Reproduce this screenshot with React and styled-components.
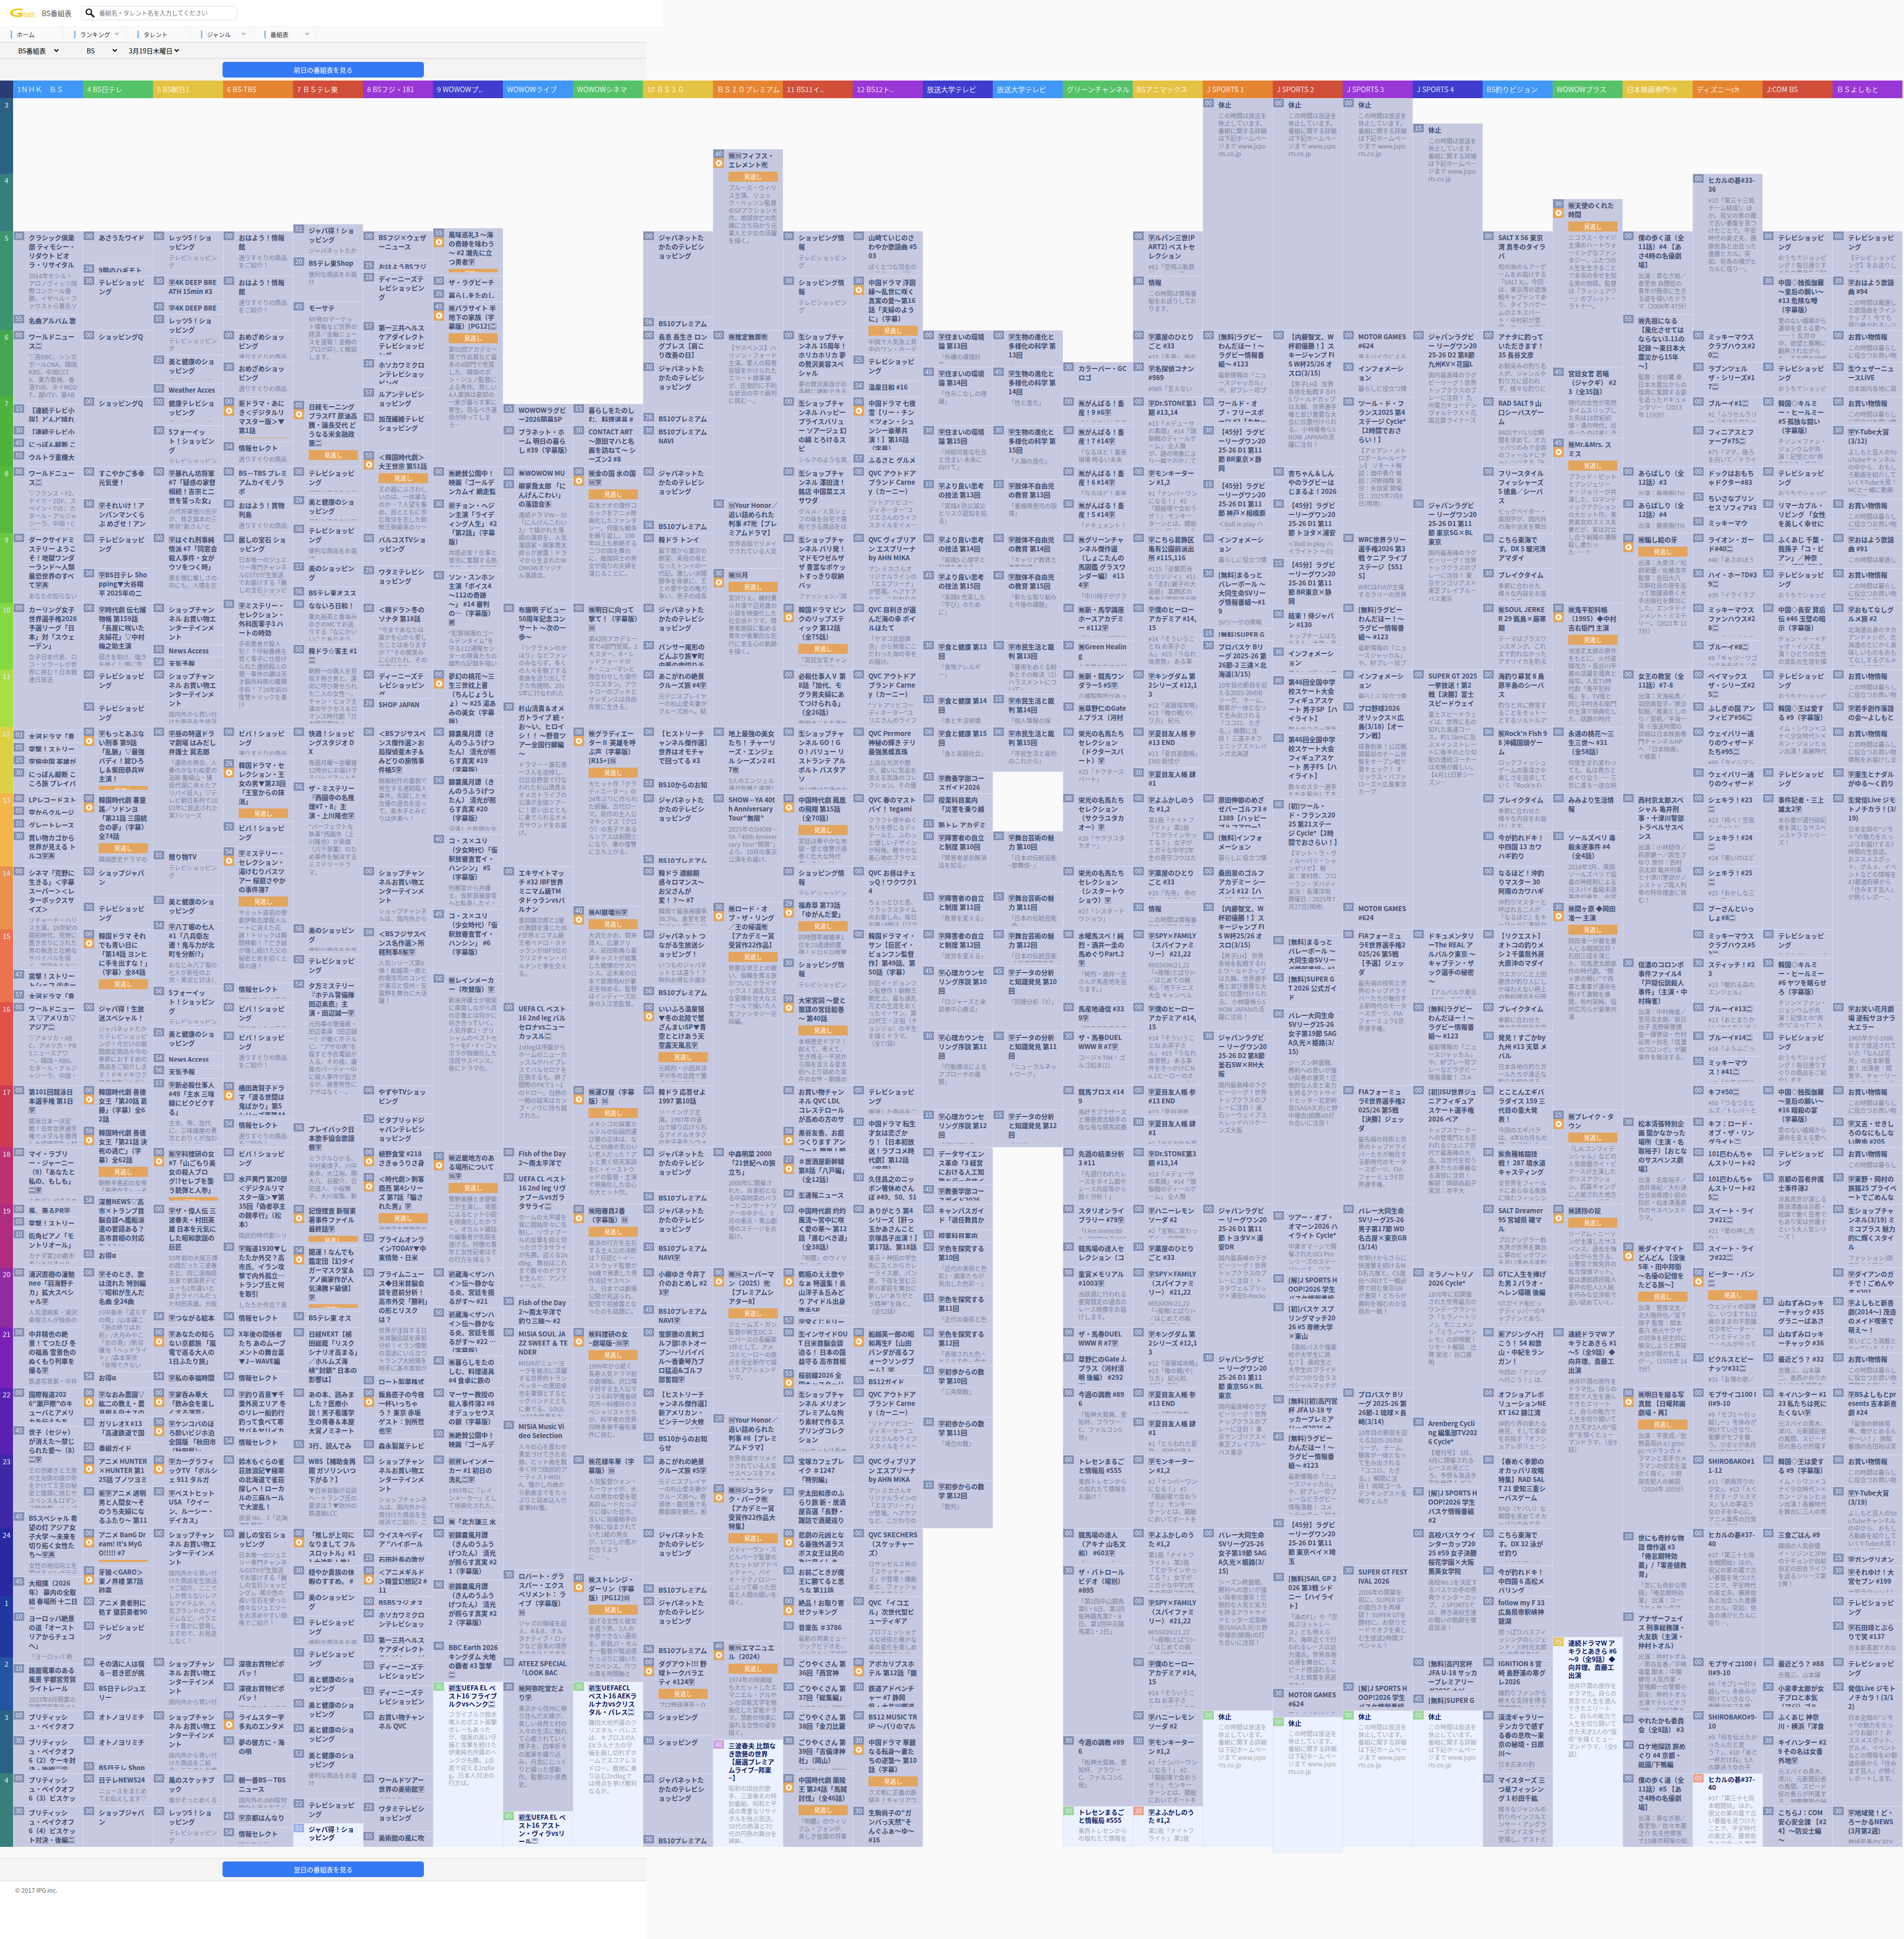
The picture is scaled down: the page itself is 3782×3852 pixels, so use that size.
import React from "react";
import styled, { createGlobalStyle } from "styled-components";

const GlobalStyle = createGlobalStyle`
  * {
    box-sizing: border-box;
  }
  body {
    margin: 0;
    width: 3782px;
    background-color: #fafafa;
    font-family: "Noto Sans CJK JP", "Liberation Sans", sans-serif;
  }
`;

const Page = styled.div`
  width: 3782px;
  height: 3852px;
  overflow: hidden;
`;
const Header = styled.header`
  display: flex;
  align-items: center;
  width: 1316px;
  height: 52px;
  padding-left: 19px;
  background-color: #fff;
`;
const SiteName = styled.h1`
  width: 78px;
  margin: 0 0 0 12px;
  font-size: 14px;
  font-weight: normal;
  color: #555;
`;
const SearchBox = styled.div`
  display: flex;
  align-items: center;
  width: 310px;
  height: 28px;
  padding: 0 0 1px 7px;
  border: 1px solid #ddd;
  border-radius: 4px;
  font-size: 12px;
  color: #777;
  svg {
    margin-right: 9px;
  }
`;
const Nav = styled.nav`
  display: flex;
  width: 1316px;
  height: 31px;
  border-top: 1px solid #eee;
  background-color: #fafafa;
`;
const NavItem = styled.div`
  display: flex;
  align-items: center;
  width: 126px;
  padding-left: 21px;
  border-right: 1px solid #eee;
  font-size: 12px;
  color: #333;
  &::before {
    content: "";
    width: 3px;
    height: 15px;
    margin-right: 9px;
    background-color: #8db8f2;
  }
  svg {
    margin: 0 14px 0 auto;
  }
`;
const Selects = styled.div`
  display: flex;
  align-items: center;
  width: 1284px;
  height: 34px;
  padding-left: 36px;
  border-top: 2px solid #e4e4e4;
  border-bottom: 2px solid #e0e0e0;
  background-color: #f4f4f4;
`;
const Select = styled.div`
  display: flex;
  align-items: center;
  justify-content: space-between;
  width: ${(props) => props.$width}px;
  margin-right: ${(props) => props.$gap}px;
  font-size: 13px;
  color: #000;
`;
const DayBar = styled.div`
  display: flex;
  align-items: center;
  justify-content: center;
  width: 1284px;
  height: ${(props) => props.$height}px;
  border-bottom: ${(props) => (props.$last ? "1px solid #ddd" : "none")};
  border-top: ${(props) => (props.$last ? "1px solid #ddd" : "none")};
  background-color: #f4f4f4;
`;
const DayButton = styled.button`
  width: 400px;
  height: 31px;
  padding: 0;
  border: none;
  border-radius: 5px;
  background-color: #3478f6;
  font-family: inherit;
  font-size: 13px;
  color: #fff;
`;
const Guide = styled.div`
  display: flex;
  margin-bottom: 9px;
`;
const Hours = styled.div`
  width: 26px;
`;
const Corner = styled.div`
  height: 35px;
  background-color: #2b3b78;
`;
const Hour = styled.div`
  padding-top: 3px;
  background-color: ${(props) => props.$color};
  font-size: 14px;
  line-height: 20px;
  text-align: center;
  color: #e8eef0;
`;
const Column = styled.div`
  width: 139px;
`;
const ColumnName = styled.div`
  height: 35px;
  padding-left: 8px;
  background-color: ${(props) => props.$color};
  font-size: 14px;
  line-height: 35px;
  white-space: nowrap;
  overflow: hidden;
  color: rgba(255, 255, 255, 0.88);
`;
const Program = styled.div`
  display: flex;
  overflow: hidden;
  border-top: 1px solid ${(props) => (props.$next ? "#e3e9f8" : "#dcdff0")};
  border-left: 1px solid ${(props) => (props.$next ? "#dde3f2" : "#dcdff0")};
  background-color: ${(props) => (props.$next ? "#ebf1ff" : "#c6c9e0")};
`;
const Side = styled.div`
  flex: none;
  width: 21px;
  margin-right: 9px;
`;
const Minute = styled.div`
  height: 17px;
  background-color: ${(props) => props.$color};
  font-size: 12px;
  line-height: 16px;
  text-align: center;
  color: #e9ecf8;
`;
const Play = styled.div`
  display: flex;
  align-items: center;
  justify-content: center;
  height: 20px;
  background-color: #e3a55e;
`;
const Body = styled.div`
  width: 98px;
  margin: 3px 0 7px;
  overflow: hidden;
  word-break: break-all;
`;
const Title = styled.div`
  font-size: 13px;
  font-weight: bold;
  line-height: ${(props) => (props.$next ? 16 : 18)}px;
  color: ${(props) => (props.$next ? "#0c1c5e" : "#414d70")};
`;
const Missed = styled.div`
  height: 20px;
  margin: 5px 0 -1px;
  background-color: #e3a55e;
  font-size: 12px;
  line-height: 19px;
  text-align: center;
  color: #fff;
`;
const Description = styled.div`
  margin-top: 5px;
  font-size: 12px;
  line-height: 15.1px;
  color: ${(props) => (props.$next ? "#a3a6ae" : "#7e839c")};
`;
const Footer = styled.footer`
  width: 1284px;
  height: 129px;
  padding: 9px 0 0 30px;
  background-color: #fff;
  font-size: 12px;
  color: #666;
`;

const channelColors = ["#4097f7", "#55c269", "#e4c243", "#e68531", "#d14e38", "#9936d6", "#403dce"];
const badgeColors = { g: "#98d699", b: "#9bb0ec", y: "#e8c65c", r: "#f2a08a", p: "#d0a0dd" };
const hourColors = [
  "#2b6184", "#367f7c", "#3d9470", "#45a651", "#4db33c", "#58b93f", "#6bc842", "#83d944", "#a9de45",
  "#dcd044", "#f4b549", "#ea9150", "#ec7350", "#e25048", "#cf3a50", "#be3070", "#b02c80", "#902ca0",
  "#7a22b8", "#5a22b2", "#3f28a6", "#2a28a0", "#2138a0", "#2355a0", "#2b6184", "#367f7c",
];

// Top of every time slot in the grid, hhmm -> px. Crowded hours are stretched.
const slots = [
  [300, 195], [315, 245], [340, 295.5], [400, 345], [430, 395], [451, 445], [455, 453], [500, 459],
  [520, 510], [525, 517], [526, 523.5], [528, 541], [530, 548], [535, 573.5], [545, 598.5], [555, 623.5],
  [556, 630], [557, 638], [600, 655.5], [625, 705], [628, 712], [630, 719], [645, 728.5], [654, 755.5],
  [655, 762], [657, 770], [700, 787.5], [705, 794.5], [715, 801.5], [726, 819], [730, 844.5], [745, 869.5],
  [754, 876.5], [755, 894.5], [757, 901], [800, 926.5], [815, 951.5], [825, 976.5], [829, 983.5],
  [830, 991], [855, 1025.5], [856, 1033], [858, 1041], [900, 1058.5], [927, 1116], [929, 1122.5],
  [930, 1129], [945, 1132.5], [956, 1165], [959, 1190], [1000, 1197.5], [1015, 1247.5], [1030, 1272],
  [1055, 1279.5], [1058, 1304.5], [1100, 1329.5], [1115, 1379], [1129, 1386.5], [1130, 1393.5],
  [1200, 1443.5], [1203, 1450], [1205, 1475], [1215, 1500], [1229, 1507], [1230, 1525], [1245, 1533],
  [1250, 1539.5], [1253, 1546], [1256, 1553], [1300, 1575.5], [1305, 1600.5], [1315, 1625.5],
  [1325, 1632], [1330, 1650.5], [1340, 1657], [1354, 1682], [1355, 1689], [1356, 1696.5], [1400, 1721],
  [1415, 1771], [1425, 1778], [1429, 1785], [1430, 1792], [1440, 1799], [1445, 1806], [1454, 1828],
  [1456, 1835], [1459, 1842], [1500, 1845.5], [1525, 1895.5], [1530, 1902.5], [1545, 1919], [1547, 1926],
  [1550, 1933.5], [1554, 1944.5], [1555, 1952], [1556, 1959], [1557, 1966], [1559, 1974], [1600, 1991],
  [1625, 2040.5], [1630, 2047.5], [1654, 2091.5], [1655, 2098], [1656, 2115.5], [1657, 2141.5],
  [1659, 2148], [1700, 2155.5], [1715, 2205], [1729, 2211.5], [1730, 2219], [1754, 2222], [1756, 2229.5],
  [1759, 2236.5], [1800, 2279], [1810, 2286.5], [1827, 2294], [1830, 2329], [1845, 2353], [1854, 2361],
  [1856, 2367], [1858, 2374], [1900, 2392], [1905, 2417], [1915, 2442], [1925, 2449], [1930, 2467],
  [1954, 2474], [1955, 2481], [2000, 2517.5], [2015, 2568], [2030, 2574.5], [2045, 2591.5], [2050, 2598],
  [2054, 2605], [2057, 2612.5], [2100, 2637], [2130, 2687], [2140, 2692.5], [2145, 2712], [2153, 2719],
  [2154, 2724], [2155, 2732], [2200, 2757], [2220, 2808], [2230, 2814.5], [2235, 2821], [2245, 2831.5],
  [2250, 2838], [2253, 2844.5], [2254, 2852], [2255, 2858.5], [2256, 2864], [2300, 2889.5], [2315, 2940],
  [2320, 2946.5], [2330, 2953], [2345, 3003], [2350, 3010], [2400, 3035.5], [2410, 3042], [2425, 3085],
  [2430, 3110], [2435, 3117.5], [2440, 3124.5], [2445, 3132], [2450, 3138], [2456, 3145.5],
  [2459, 3159.5], [2500, 3170.5], [2504, 3195], [2510, 3202], [2528, 3210], [2530, 3220], [2533, 3245],
  [2535, 3252], [2540, 3259.5], [2556, 3265.5], [2557, 3272.5], [2600, 3291.5], [2602, 3298],
  [2610, 3305], [2626, 3323], [2630, 3341], [2631, 3348.5], [2645, 3365], [2655, 3374], [2700, 3398],
  [2705, 3405], [2724, 3423], [2730, 3448], [2740, 3455.5], [2753, 3473.5], [2755, 3499], [2800, 3523],
  [2822, 3572.5], [2825, 3579.5], [2830, 3588], [2845, 3598], [2851, 3622], [2854, 3629.5],
  [2855, 3637.5], [2856, 3644], [2900, 3669],
];
const slotTops = new Map(slots);

// One line per programme: hhmm, flag, title|description.
// "*" = catch-up available, g/b/y/r/p = not on air yet, "-" = nothing scheduled.
const channels = [
  ["1ＮＨＫ　ＢＳ", `
0500 クラシック倶楽部 ティモシー・リダウト ビオラ・リサイタル|2014年セシル・アロノヴィッツ国際コンクール優勝。イザベル・ファウストら著名ソリス
0555 名曲アルバム 歌
0600 ワールドニュース🈔|▽英BBC、シンガポールCNA、韓国KBS、中国CCTV、東方衛視、香港TVB、タイMCOT、越VTV、豪ABC、米NBCTV
0715 【連続テレビ小説】どんど晴れ
0730 【連続テレビ小
0745 にっぽん縦断 こ
0755 ウルトラ重機大
0800 ワールドニュース🈔|▽フランス・F2、ドイツ・ZDF、スペイン・TVE、カタール・アルジャジーラ、中国・CCTV、シンガポール
0900 ダークサイドミステリー ようこそ！地獄ワンダーランド～人類最恐世界のすべて🈑🈞|あなたの知らない
1000 カーリング女子世界選手権2026予選リーグ「日本」対「スウェーデン」|女子日本代表、ロコ・ソラーレが世界に挑む！日本戦連日放送
1203 大河ドラマ「豊
1205 突撃！ストリー
1215 空旅中国 英雄が
1230 にっぽん縦断 こころ旅 プレイバ
1300 LPレコードスト
1305 空からクルージ
1315 グレートレース
1330 買い物カゴから世界が見える トルコ🈑🈞
1400 シネマ「荒野に生きる」＜字幕スーパー＞＜レターボックスサイズ＞|リチャード・ハリス主演。19世紀の開拓時代、荒野に置き去りにされた男の執念と壮絶なサバイバルを描く。実話をもとに
1547 突撃！ストリートシェフ @ホー
1557 大河ドラマ「豊
1600 ワールドニュース ▽アメリカ▽アジア🈔|▽アメリカ・ABC、アメリカ・PBSニュースアワー、韓国・KBS、カタール・アルジャジーラ、中国・CCTV
1700 第101回競泳日本選手権 第1日🈑|競泳日本一決定戦！去年世界選手権でメダルを獲得した成田実生・村佐達也ら10代
1800 マイ・ラブリー・ジャーニー（9）「あなたと私の、もしも」🈔🈑|人生どんづまりの
1900 風、薫るPR🈑
1905 突撃！ストリー
1915 街角ピアノ「モントリオール」|カナダ第2の都市モントリオール
2000 浦沢直樹の漫勉neo「羽海野チカ」拡大スペシャル🈑|人気漫画家・浦沢直樹さんが独自の
2100 中井精也の絶景！てつたび 冬の福島 雪景色のぬくもり列車を撮る🈑|鉄道写真家・中井
2200 国際報道2026“瀬戸際”のキューバとアメリカを伝えたち
2245 世子（セジャ）が消えた～禁じられた愛～（8）🈔🈑|王の世継ぎと王族の主治医の娘が命をかけて王室の秘密と陰謀に挑むサスペンス＆ロマンス時代劇。イ・ゴ
2345 BSスペシャル 希望の灯 アジア女子大学 ～未来を切り拓く女性たち～🈑🈞|女性の地位向上を掲げるバングラデ
2445 大相撲（2026年） 幕内の全取組 春場所 十二日目
2510 ヨーロッパ絶景の道「オーストリアからチェコへ」|「ヨーロッパ 絶
2610 路面電車のある風景 宇都宮芳賀ライトレール|2023年8月開業の宇都宮芳賀ライト
2700 ブリティッシュ・ベイクオフ6
2730 ブリティッシュ・ベイクオフ6（2）ケーキ対決・後編🈔🈑
2800 ブリティッシュ・ベイクオフ6（3）ビスケット
2830 ブリティッシュ・ベイクオフ6（4）ビスケット対決・後編🈔🈑`],
  ["4 BS日テレ", `
0500 あさうたワイド
0526 9階のハギモトさ
0530 テレビショッピング
0600 ショッピングQ
0700 ショッピングQ
0800 すこやかご多幸元気便！
0830 🈑それいけ！アンパンマンくらぶ めざせ！アン
0900 テレビショッピング
0930 🈑BS日テレ Shopping▼大谷翔平 2025年の二刀流
1000 🈑時代劇 伝七捕物帳 第159話「長屋に咲いた夫婦花」▽中村梅之助主演|弱きを助け、強きを挫く！ 情に厚
1100 テレビショッピング
1130 テレビショッピング
1200* 🈑もっとあぶない刑事 第9話「乱脈」▽最強バディ！舘ひろし＆柴田恭兵W主演！
1300* 韓国時代劇 薯童謠／ソドンヨ「第21話 三国統合の夢」（字幕）全74話|韓国歴史ドラマの
1400 ショップジャパン
1430 テレビショッピング
1500* 韓国ドラマ それでも青い日に「第14話 ヨンヒに手を出すな！」（字幕）全84話
1600 ジャパ得！生放送スペシャル！|ジャパネットたかたテレビショッピング！今だけの期間限定商品や今の季節におすすめの商品をご紹介します！ドキドキワクワクの生テレビシ
1700* 韓国時代劇 善徳女王「第20話 葛藤」（字幕）全62話
1759* 韓国時代劇 善徳女王「第21話 決死の逃亡」（字幕）全62話|朝鮮半島初の女帝「善徳女王」…そ
1858 深層NEWS▽高市×トランプ首脳会談へ艦船派遣の要請ある？高市首相の対応生さない
1955 お得α
2000 🈑そのとき、歌は流れた 特別編▽昭和が生んだ名曲 全24曲|川中美幸「遣らずの雨」/山本譲二「旅の終りはお前」/大月みやこ「女の港」/新沼謙治「ヘッドライト」/森本英世「我慢できない
2154 お得α
2200* 🈑なおみ農園▽紘二の教え・農具編＆白ナスの
2230 ガリレオX #13「高速鉄道で国
2256 番組ガイド
2300* アニメ HUNTER×HUNTER 第125話 ブノツヨミ
2330 🈟🈑アニメ 透明男と人間女～そのうち夫婦になるふたり～ 第11
2400* アニメ BanG Dream! It's MyGO!!!!! #7
2430* 牙狼＜GARO＞東ノ界楼 第7話 砂霧
2500 アニメ 勇者刑に処す 懲罰勇者90
2530 テレビショッピング
2600 その酒に人は宿る－若き匠が挑
2630 BS日テレジュエリー
2700 オトノヨリミチ
2730 オトノヨリミチ
2755 BS日テレ Shopp
2800 日テレNEWS24|ニュースをまとめてお伝えします▽
2830 ショップジャパン`],
  ["5 BS朝日1", `
0500 レッツ5！ショッピング|テレビショッピング
0530 🈑4K DEEP BREATH 15min #3
0545 🈑4K DEEP BRE
0555 レッツ5！ショッピング|テレビショッピング
0625 美と健康のショッピング|テレビショッピ
0655 Weather Access
0700 健康テレビショッピング|テレビショッピ
0730 5フォーイット！ショッピング|テレビショッピング
0800 🈑暴れん坊将軍 #7「疑惑の家督相続！吉宗と二世を誓った女」|八代将軍徳川吉宗が、貧乏旗本の三男坊“新さん”と
0900 🈑はぐれ刑事純情派 #7「同窓会殺人事件・女がウソをつく時」|悪を憎む厳しさの中にも、人情を忘
1000 ショップチャンネル お買い物エンターテインメント
1055 News Access
1058 天気予報
1100 ショップチャンネル お買い物エンターテインメント|国内外から買い付けた商品を生放送
1200 🈑昼の特選ドラマ劇場 はみだし弁護士 巽志郎|「運命の再会、人妻のかなわぬ愛の追跡 磐梯山・猪苗代湖に消えたアリバイ証人」▽テレビ朝日系列で2003年に放送された第7シリーズ
1355 贈り物TV|テレビショッピング
1425 美と健康のショッピング
1454 🈑八丁堀の七人 #1「八兵衛左遷！鬼与力が北町を分断!?」|おなじみ八丁堀の七人が新任の上司・黒沢と対決し
1556 5フォーイット！ショッピング|テレビショッピング
1625 美と健康のショッピング
1654 News Access
1656 天気予報
1657 🈑新必殺仕事人 #49「主水 三味線にビクビクする」|主水、秀、加代に、三味線屋の勇次とおりくが加わり、かんざし
1800* 🈖🈑科捜研の女 #7「山ごもり美女の殺人ブログ!?セレブを襲う銃弾と人参」
1900 🈑ザ・偉人伝 三波春夫・村田英雄 日本を元気にした昭和歌謡の巨匠|55年前の大阪万博の顔だった三波春夫と、同じ浪曲師出身で歌謡界デビューも1年違いと良きライバルだった村田英雄。大阪
2054 🈑つながる絵本
2100* 🈑あなたの知らない京都旅 「嵐電で巡る大人の1日ふたり旅」
2154 🈑私の幸福時間
2200* 🈑家呑み華大「飲み会を楽しくする演芸」
2230* 🈑ケンコバのほろ酔いビジホ泊 全国版 「秋田市（秋田県）」
2300* 🈑カーグラフィックTV 「ポルシェ 911 タルガ
2330 🈑ベストヒットUSA 「クイーン、ルーシー・デイカス」
2400 ショップチャンネル お買い物エンターテインメント|国内外から買い付けた商品を生放送でご紹介。ここでしか買えないレアなアイテムや、人気ブランドのアイテムなど、バラエティ豊かに登場しますので、お見逃しなく！
2600 ショップチャンネル お買い物エンターテインメント|国内外から買い付けた商品をご紹
2700 ショップチャンネル お買い物エンターテインメント|国内外から買い付けた商品をご紹介。ここでしか買
2800 風のスケッチブック|風がそっとめくる
2830 レッツ5！ショッピング|テレビショッピング`],
  ["6 BS-TBS", `
0500 おはよう！情報館|選りすぐりの商品をご紹介！
0530 おはよう！情報館|選りすぐりの商品をご紹介！
0600 おめざめショッピング|選りすぐりの商品
0630 おめざめショッピング|選りすぐりの商品
0700* 🈟ドラマ・あにき＜デジタルリマスター版＞▼第1話
0754 情報セレクト|選りすぐりの商品
0800 BS－TBS プレミアムカイモノラボ
0830 おはよう！買物列島|選りすぐりの商品
0900 麗しの宝石 ショッピング|日本唯一のジュエリー専門チャンネルGSTVが生放送でお届けする「麗しの宝石ショッピング」。稀少性の
0959 🈑ミステリー・セレクション・外科医零子3 ハートの時効|手術患者が殺人犯！？守秘義務を貫く零子に仕掛けられた連続殺人の罠…事件の鍵は天才脳外科医の難関手術！？26年前の復讐トリックを暴け
1200 ビバ！ショッピング|選りすぐりの商品
1229* 韓国ドラマ・セレクション・王女の男▼第23回「王室からの抹消」
1325 ビバ！ショッピング
1354* 🈑ミステリー・セレクション・湯けむりバスツアー 桜庭さやかの事件簿7|サミット直前の惨劇伊勢志摩殺人ルートに消えた花嫁！トリックは瞬間移動！？亡き妹が隠し続けた父の秘密と死を招く土鍋の謎！
1555 情報セレクト|選りすぐりの商品
1600 ビバ！ショッピング|選りすぐりの商品
1630 ビバ！ショッピング|選りすぐりの商品をご紹介！
1659* 橋田壽賀子ドラマ「渡る世間は鬼ばかり」第5シリーズ再第44話
1754 情報セレクト|選りすぐりの商品をご紹介！
1800 ビバ！ショッピング
1830 水戸黄門 第20部＜デジタルリマスター版＞▼第35回「偽者亭主の親孝行」（松本）|国民的時代劇シリ
1930 🈑報道1930▼したたか外交？高市氏、イラン攻撃で内外孤立…トランプ氏と何を取引|したたか外交？高
2054 情報セレクト
2100 X年後の関係者たち あのムーブメントの舞台裏▼J－WAVE編
2154 情報セレクト
2200 🈑釣り百景▼千葉外房エリア 冬のリレー船釣行 釣って食べて寒サバ＆ヤリイカ
2254 情報セレクト|選りすぐり
2300 鈴木もぐらの雀荘放浪記▼極寒の北海道で雀荘探しへ！ローカルの三麻ルールで大波乱！|放浪 No．3「北海道札幌市
2400 麗しの宝石 ショッピング|日本唯一のジュエリー専門チャンネルGSTVが生放送でお届けする「麗しの宝石ショッピング」。稀少性の高い宝石を使った様々なジュエリーをお求めやすい価格でご紹介！
2600 深夜お買物ピポパッ！
2630 深夜お買物ピポパッ！|選りすぐりの商品
2700* ライムスター宇多丸のエンタメ
2730 夢の彼方に・海の唄
2800 朝一番BS－TBSニュース|国内外のJNN取材網から送られてく
2845 🈑京都はんなり
2854 情報セレクト|選りすぐり`],
  ["7 ＢＳテレ東", `
0451 ジャパ得！ショッピング|ジャパネットたかたテレビ
0520 BSテレ東Shop|便利な商品をお届け
0545 モーサテ|NY発のマーケット情報など世界の経済／金融ニュースを速報！金融のプロが詳しく解説します。
0705* 日経モーニングプラスFT 原油高騰・議長交代 どうなる米金融政策🈔
0800 テレビショッピング|便利な商品をお届
0829 美と健康のショッピング|便利な商品をお届
0858 テレビショッピング|便利な商品をお届け
0927 美のショッピング
0956 BSテレ東オスス
0959 なないろ日和！|薬丸裕英と香坂みゆきのMCでお送りする『なにかいいことありそう
1055 韓ドラ☆客主 #1🈔|朝鮮一の商人を目指す熱き男と、運命に呼び寄せられた二人の女性―。チャン・ヒョク主演のサクセス＆ロマンス時代劇「日本語字幕付／
1200 快適！ショッピングスタジオ DX|毎週月曜～金曜昼12時台にお届けするジャパネットた
1256 ザ・ミステリー『西園寺の名推理#7・8』主演・上川隆也🈑|“パーフェクトな執事”西園寺（上川隆也）が奥様（八千草薫）のため事件を解決するミステリードラマ。
1456 美のショッピング|便利な商品をお届
1525 テレビショッピング
1554 夕方ミステリー『ホテル警備隊 田辺素直』主演・田辺誠一🈑|元刑事の警備員・田辺素直（田辺誠一）が働くホテルに、“アザの男”を殺すと予告電話が入る。その夜、議員のパーティー中に殺人事件が起きるが、被害男性にアザはなく…。
1756 プレイバック日本歌手協会歌謡祭🈑|ミラクルひかる、中村美律子、川中美幸、大江裕、関大八、谷龍介、合田道人、小桜舞子、大川栄策、新
1900* 記憶捜査 新宿東署事件ファイル 最終話🈑
1954* 開運！なんでも鑑定団【幻タイガーマスク宝＆アノ画家作が人気沸騰ド級値】🈑
2054 BSテレ東 オス
2100 日経NEXT【植田総裁「リスクシナリオ高まる」／ホルムズ海峡“封鎖” 日本の影響は】
2200 あの本、読みました？医療小説！男子看護学生の青春＆本屋大賞ノミネート
2255 3行、読んでみた
2300 WBS【補助金再開 ガソリンいつ下がる？】|▼日米首脳が会談へ…トランプ氏の要求は？▼欧州の鉄道版LCC
2400* 「推しが上司になりまして フルスロットル」#11 大波乱！推し
2430 穏やか貴族の休暇のすすめ。 #
2459 美のショッピング
2528 テレビショッピング|便利な商品をお届
2557 テレビショッピング
2626 美と健康のショッピング
2655 美と健康のショッピング
2724 美と健康のショッピング
2753 美と健康のショッピング|便利な商品をお届け
2822 テレビショッピング
2851b ジャパ得！ショッピング`],
  ["8 BSフジ・181", `
0500 BSフジ×ウェザーニュース
0525 おはようBSフジ
0528 ディーニーズテレビショッピング
0557 第一三共ヘルスケアダイレクト テレビショッピング
0628 ホソカワミクロンテレビショッピング
0657 ルアンテレビショッピング
0726 加茂繊維テレビショッピング
0755* ＜韓国時代劇＞大王世宗 第51話|王の器にふさわしいのは、一体誰なのか―？人望を集め、民とともに歩む政治を志した朝鮮王朝最高のリー
0900 バルコスTVショッピング
0929 ワタミテレビショッピング
1000 ＜韓ドラ＞冬のソナタ 第18話|“今まであなたは誰かを心から愛したことはありますか？”その微笑みに心打たれ、その瞬間に恋をし
1100 ディーニーズテレビショッピング
1129 SHOP JAPAN
1200 ＜BSフジサスペンス傑作選＞お局探偵亜木子＆みどりの旅情事件帳5🈑|映画制作の裏側で発生する連続殺人事件。失踪した大女優の過去を巡って、亜木子とみどりは伊東へ！
1400 ショップチャンネルお買い物エンターテインメント|ショップチャンネルは、国内外から
1459 ＜BSフジサスペンス名作選＞所轄刑事8🈖🈑|人気シリーズ第8弾！船越英一郎と的場浩司のコンビが東京と信州・安曇野を舞台に大活躍！
1700 やずやTVショッピング
1729 ビタブリッドジャパンテレビショッピング
1800* 植野食堂 #218さきゅうりさ身とき
1830* ＜時代劇＞剣客商売 第4シリーズ 第7話「騙された男」🈑|池波正太郎原作の
1925 プライムオンラインTODAY▼中東情勢・日米
2000 プライムニュース◆日米首脳会談を直前分析！高市外交「勝利」の形とリスクは？|世界が注目する日米首脳会談を直前分析！イラン情勢の混迷にいら立つトランプ大統領を相手に高市首相が
2155 ロート製薬株式
2200* 飯島直子の今夜一杯いっちゃう？ 東京 赤坂 ゲスト：別所哲也🈑
2255 森永製菓テレビ
2300 ショップチャンネルお買い物エンターテインメント|ショップチャンネルは、国内外から買付けた商品を生放送でご紹介。こ
2400 ウイスキペディア “ハイボール
2425 石田社長の歌が
2430* ＜アニメギルド＞精霊幻想記2 #11
2500 BSBSフジ オス
2504 ホソカワミクロンテレビショッ
2533 第一三共ヘルスケアダイレクトテレビショッピ
2602 ディーニーズテレビショッピン
2631 ディーニーズテレビショッピン
2700 お買い物チャンネル QVC
2800 ワールドツアー 世界の美術館🈑|今回のワールド
2825 ワタミテレビショッピング
2855 美術館の風に吹`],
  ["9 WOWOWプ..", `
0455* 風味巡礼3 ～海の奇跡を味わう～ #2 潮先に立つ勇者🈑
0530 ザ・ラグビーチ
0535 暮らしをたのし
0545* 🈙パラサイト 半地下の家族（字幕版）[PG12]🈔|第92回アカデミー賞で作品賞など最多の4部門で受賞した、韓国のポン・ジュノ監督による秀作。貧しい4人家族は豪邸の一家が暮らす家に寄生。恐るべき運命が待ってしまう…
0800 🈚絶賛公開中！映画『ゴールデンカムイ 網走監
0830 🈠チョン・ヘジン主演「ライディング人生」 #2 「第2話」（字幕版）|共感必至！仕事と育児に奮闘する熱血ワーキングママ
0945 ソン・スンホン主演「ボイス4～112の奇跡～」 #14 審判の…（字幕版）🈡|“犯罪現場のゴールデンタイム”を守る112通報センターの隊員たちの熾烈な記録を描いた「ボイス3～112
1100* 夢幻の桃花～三生三世枕上書（ちんじょうしょ）～ #25 湯あみの美女（字幕版）
1200 錦嚢風月譚（きんのうふうげつたん） 清光が照らす真実 #19（字幕版）
1250 錦嚢風月譚（きんのうふうげつたん） 清光が照らす真実 #20（字幕版）|没落した聡明な女
1340 コ・ス×ユリ（少女時代）「仮釈放審査官イ・ハンシン」 #5（字幕版）|刑務官から弁護士、仮釈放審査官へと転身したイ・
1445 コ・ス×ユリ（少女時代）「仮釈放審査官イ・ハンシン」 #6（字幕版）
1550 🈙レインメーカー（吹替版）🈑|新米弁護士が現実に直面しながら真の正義とは何かに向き合っていく。人気作家J・グリシャムのベストセラーをF・F・コッポラが映画化した法廷サスペンス。後にドラマ化。
1810* 🈙近畿地方のある場所について🅍🈑|菅野美穂と赤楚衛二が主演し、背筋によるヒット小説を映画化したホラー。オカルト雑誌の編集者が失踪を遂げる。同僚の青年と女性記者はその行方を探るう
2000 🈠蔵海＜ザンハイ＞伝～静かなる炎、宮廷を揺るがす～ #21
2050 🈠蔵海＜ザンハイ＞伝～静かなる炎、宮廷を揺るがす～ #22 …（字幕版）
2140 🈚暮らしをたのしむ、料理道具 #4 食卓に鉄の
2200 マーサー教授の殺人事件簿2 #8 オデュッセウスの鎖（字幕版）
2250 🈚絶賛公開中！映画『ゴールデ
2300 🈠🈡レインメーカー #1 初日の洗礼🈔🈑|1997年に『レインメーカー』として映画化された、ジョン・グリシャム
2350 🈚「北方謙三 水
2400 🈠錦嚢風月譚（きんのうふうげつたん） 清光が照らす真実 #21（字幕版）
2450 🈠錦嚢風月譚（きんのうふうげつたん） 清光が照らす真実 #22（字幕版）
2540 BBC Earth 2026 キングダム 大地の覇者 #3 襲撃🈔
2630g 🈠🈢UEFA EL ベスト16 フライブルクvsヘンク🈔|フライブルク鈴木唯人のポスト直撃ボレーもあったが、強度の高い守備と攻撃を続けた伊東純也所属のヘンクが先勝。1点差で迎える2ndleg。日本人対決の行方は。`],
  ["WOWOWライブ", `
0715 WOWOWラグビー2026開幕SP注
0730 プラネット・ホーム 明日の暮らし #39（字幕版）
0800 🈚WOWOW MU
0815 柳家喬太郎 「にんげんこわい」の落語会🈕|連続ドラマW－30「にんげんこわい2」で描かれた落語の演目を、人気落語家・柳家喬太郎らが披露！ドラマから生まれたWOWOWオリジナル落語会。
1000 布施明 デビュー50周年記念コンサート ～次の一歩～|「シクラメンのかほり」などファンのみならず、多くの人々を魅了する楽曲を送り出してきた布施明。2015年に行なわれた東京
1130 杉山清貴＆オメガトライブ 続・お～い、ヒロイシ！！ ～野音ツアー全国行脚編～|ドラマー・廣石惠一さんを追悼し、日比谷野音で行なわれた杉山清貴＆オメガトライブの公演が全国ツアーに！思い出とともに奏でられるオメガサウンドをお届け。
1400 エキサイトマッチ #32 IBF世界ミニマム級TM タドゥランvsバルナン|重岡銀次郎と2度の激闘を演じたIBF世界ミニマム級王者ペドロ・タドゥランがIBF3位のクリスチャン・バルナンと拳を交える。
1600 UEFA CL ベスト16 2nd leg バルセロナvsニューカッスル🈔|1stlegは序盤からホームのニューカッスルがハイプレスでバルセロナを圧倒するも、終了間際のPKで1－1のドロー。白熱の一戦の結末はカンプ・ノウに持ち越された。
1800 Fish of the Day2～南太平洋で釣
1830 UEFA CL ベスト16 2nd leg リヴァプールvsガラタサライ🈔|ホームの大声援を背に開始早々に先制し、リヴァプールの反撃を抑え切ったガラタサライが先勝。迎える2ndleg、舞台はこれまで数々のドラマを生んだ、アンフィールド。
2030 Fish of the Day2～南太平洋で釣り三昧～ #2
2100 MISIA SOUL JAZZ SWEET ＆ TENDER|MISIAがニューヨークを拠点に活躍する世界的トランペッターの黒田卓也を筆頭とするビッグバンドとともに奏でる、SOUL JAZZな世界をお
2235 MISIA Music Video Selection|人々の心を震わせ勇気づけてきた名曲、ヒット曲を数多く持つ国民的アーティストMISIA。懐かしの曲から新曲までをたっぷりと詰め込んだ豪華MV集。
2435 ロバート・グラスパー・エクスペリメント： ライブ（字幕版）🅍|ジャズの領域を超え、R＆B、オルタナティブ・ロックなど音楽の境界をのみ込んできた
2600 ATEEZ SPECIAL『LOOK BAC
2630 🈙阿弥陀堂だより🈑|東京から信州に移り住んだ夫婦が、美しい自然と村の人々の生活に触れて心癒されていく様子を、四季折々の風景を織り込み、丹念にじっくりと綴った感動作。監督は小泉堯史。
2845g 🈠🈢UEFA EL ベスト16 アストン・ヴィラvsリール🈔`],
  ["WOWOWシネマ", `
0715 暮らしをたのしむ、料理道具 #
0730 CONTACT ART～原田マハと名画を訪ねて～ シーズン2 #8
0800* 🈙金の国 水の国🅍🈑|岩本ナオの傑作コミックをアニメ映画化したファンタジー。何度も戦争を繰り返し、100年以上も断絶する二つの国を舞台に、敵国同士の男女が偽りの夫婦を演じることに。
1000 🈙明日に向って撃て！（字幕版）🅍|第42回アカデミー賞で4部門受賞。2大スター、R・レッドフォードがP・ニューマンと顔合わせした傑作ウエスタン。アウトローのブッチとサンダンスは自由奔放に生きる。
1200* 🈙グラディエーターⅡ 英雄を呼ぶ声（字幕版）[R15+]🅍|大ヒット作「グラディエーター」の24年ぶりに作られた続編。古代ローマ。前作の主人公マキシマス（クロウ）の息子であるルシアスは剣闘士になり、妻の復讐に立ち上がる。
1440* 🈙AI崩壊🅍🈑|大沢たかお、賀来賢人、広瀬アリス、岩田剛典ら豪華キャストが結集した戦慄のサスペンス。近未来の日本で医療用AIが暴走を始める。監督はインディーズ出身の入江悠監督。
1700* 🈙運び屋（字幕版）🅍|メキシコの麻薬カルテルの伝説的運び屋の正体は、なんと90歳の気のいい老人だった！アッと驚く仰天実話をC・イーストウッドの監督・主演で映画化した会心の大ヒット作。
1900* 🈙陪審員2番（字幕版）🅍|裁決の行方を左右する主人公の決断は？巨匠C・イーストウッド監督が94歳で発表した秀作法廷サスペンス。日本では劇場公開が見送られ、配信で初披露となったのも話題に。
2100* 🈙科捜研の女 −劇場版−🅍🈑|1999年から続く長寿人気ドラマ初の劇場版。沢口靖子扮する主人公マリコら科学捜査研究所＝科捜研のスペシャリストたちが、科学者の世界同時多発不審死事件に挑む。
2300 🈙花様年華（字幕版）🅍|人気監督ウォン・カーウァイが、大人の男女の愛を耽美的ムードたっぷりに描いた佳作。互いに結婚相手の不倫に悩まされていた1組の男女が、いつしか惹かれ合うように……。
2440* 🈙ストレンジ・ダーリン（字幕版）[PG12]🅍|逃げる女性と彼女を追う男。2人の予想できない運命を、新鋭JT・モルナー監督が緊迫感たっぷりに描いたサスペンス。六つの章を時間軸と
2630g 🈠🈢UEFAECL ベスト16 AEKラルナカvsクリスタル・パレス🈔|鎌田大地所属のクリスタル・パレスは、キプロスのAEKラルナカの守備を崩し切れずホームでスコアレスドロー。敵地に乗り込む2ndlegでは得点を挙げ勝利なるか。`],
  ["10 ＢＳ１０", `
0500 ジャパネットたかたのテレビショッピング
0556 BS10プレミアム
0600 長息 長生き ロングブレス【肩こり改善の日】
0630 ジャパネットたかたのテレビショッピング
0726 BS10プレミアム
0730 BS10プレミアムNAVI
0800 ジャパネットたかたのテレビショッピング
0856 BS10プレミアム
0900 韓ドラ トンイ|最下層から粛宗の側室、英祖の母となったトンイの一代記。激しい派閥闘争を背景に、王との愛や女の権力争い、息子の成長
1000 ジャパネットたかたのテレビショッピング
1030 パンサー尾形のどんぶり旅▼町中華の肉切りチャ
1100 あこがれの絶景クルーズ旅 #4🈑|元テニスプレイヤーの杉山愛夫妻がクルーズ旅へ。結
1200 【ヒストリーチャンネル傑作選】世界はオモチャで回ってる #3
1253 BS10からのお知
1300 ジャパネットたかたのテレビショッピング
1356 BS10プレミアム
1400 韓ドラ 適齢期惑々ロマンス～お父さんが変！？～ #7|韓国で最高視聴率36.5%。食堂を営むピョン家に、父
1500 ジャパネット つながる生放送ショッピング！|いつものジャパネットとは違う！？特別お得な企画を
1556 BS10プレミアム
1600* いいふろ温泉宿▼冬の北陸で蟹ざんまいSP▼青空ととけあう天空露天風呂🈑|元純烈・小田井涼平が冬の北陸で蟹ざんまいSP！
1700 韓ドラ 応答せよ1997 第10話|ソ・イングク主演。1997年の釜山で繰り広げられるアイドルオタクの女子高生シウォン
1800 ジャパネットたかたのテレビショッピング
1856 BS10プレミアム
1900 ジャパネットたかたのテレビショッピング
1930 BS10プレミアムNAVI🈑
2000 小柳ゆき 今井了介のおとめし #23🈑
2045 BS10プレミアムNAVI🈑
2100 蛍原徹の真剣ゴルフ部!ホトオープン～リバイバル～香妻琴乃プロ猛追&ゴルフ部奮闘🈑
2200 【ヒストリーチャンネル傑作選】新アメリカン・ビンテージ大修復ショー #5🈑
2253 BS10からのお知らせ
2300 あこがれの絶景クルーズ旅 #5🈑|元テニスプレイヤーの杉山愛夫妻がクルーズ旅へ。寄港地・鹿児島で名勝庭園を観光。船
2400 ジャパネットたかたのテレビショッピング
2456 BS10プレミアム
2500 ジャパネットたかたのテレビショッピング
2556 BS10プレミアム
2600* ダグアウト!!! 野球トークバラエティ #124🈑|プロ野球選手・O
2700 ショッピング
2730 ショッピング
2800 ジャパネットたかたのテレビショッピング
2856 BS10プレミアム`],
  ["ＢＳ１０プレミアム", `
0340* 🈙🅍フィフス・エレメント🈥|ブルース・ウィリス主演、リュック・ベッソン監督のSFアクション大作。地球存亡の危機に立ち向かう元軍人と少女の活躍を描く。
0600 🈙推定無罪🈥|【サスペンス】ハリソン・フォード主演。愛人の殺害容疑をかけられたエリート検事補が、圧倒的に不利な状況の中で裁判に挑む…。
0830 🅍Your Honor／追い詰められた判事 #7🈥【プレミアムドラマ】|世界各国でリメイクされている人気
0930* 🈙🅍月|宮沢りえ、磯村勇斗共演で辺見庸の小説を映画化した社会派ドラマ。障害者施設に勤める青年が衝撃的な犯行に至る心の軌跡を描く。
1200 地上最強の美女たち！ チャーリーズ・エンジェル シーズン2 #17🈥|3人のエンジェル達が危機と直面し
1300 SHOW－YA 40th Anniversary Tour“無限”|2025年のSHOW－YA「40th Anniversary Tour“無限”」より、10月の東京公演をお届け。
1430* 🈙ロード・オブ・ザ・リング／王の帰還🈥【アカデミー賞受賞作22作品】|邪悪な冥王との戦い、指輪を葬る旅がついにクライマックス！波乱万丈な冒険を壮大なスケールで描いた人気ファンタジー完結編。
1800 中森明菜 2000「21世紀への旅立ち」|2000年に開催された、自身初となる中森明菜のバラードコンサートツアーの中から、5月の東京・青山劇場のステージをお届け。
2000* 🈙🅍スーパーマン（2025）🈥【プレミアムシアター8】|ジェームズ・ガン監督が新生DCユニバースの長編第1作として、アメコミヒーローの原点を完全新作で描いたアクションドラマ。
2220 🅍Your Honor／追い詰められた判事 #8【プレミアムドラマ】|世界各国でリメイクされている人気サスペンスをアメリカを舞台にリメ
2320* 🈙🅍ジュラシック・パーク🈥【アカデミー賞受賞作22作品大特集】|スティーヴン・スピルバーグ監督の大ヒットSFアドベンチャー。バイオ・テクノロジーによって蘇った恐竜と人間の闘いを描く。
2540* 🈙🅍エマニュエル（2024）|1974年の映画版も大ヒットしたエマニエル・アルサンの官能文学を映画化した官能ドラマ。禁断の快楽に溺れる女性の姿を描く。
2740p 三波春夫 比類なき歌藝の世界【厳選プレミアムライブ−邦楽−】|昭和の国民的歌手、三波春夫の特別番組。昭和と平成の貴重なリサイタルを独占放送。50代の熱演と70代の円熟の舞台を堪能。`],
  ["11 BS11イ..", `
0500 ショッピング情報|テレビショッピング
0530 ショッピング情報|テレビショッピング
0600 🈢ショップチャンネル 15周年！ ホリカホリカ 夢の贅沢美容スペシャル|夢の贅沢美容がお手軽に堪能できる
0700 🈢ショップチャンネル ハッピープライスバリュー ソアージュ 幻の綿 とろけるスピ|シルクのような風
0800 🈢ショップチャンネル 澤田流！ 銘店 中国菜エスサワダ|グルメ／人気シェフの味を自宅で堪能できる商品をは
0900 🈢ショップチャンネル パリ発！ マドモワゼルザザ 豊富なポケットすっきり収納バッ|ファッション／国
1000* 韓国ドラマ ピンクのリップスティック 第12話（全75話）|「宮廷女官チャングム」のパク
1100 必殺仕事人Ⅴ 第8話「加代、モグラ男夫婦にあてつけられる」（全26話）|藤田まこと主演の
1200 🈢ショップチャンネル GO！GO！バリュー リストランテ アルポルト パスタアソ|昼12時は午後のお
1300* 中国時代劇 鳳凰の飛翔 第15話（全70話）|宮廷は華やかな地獄…愛と復讐が渦巻く壮大な時代劇。ストーリー
1400 ショッピング情報|テレビショッピン
1429* 福寿草 第73話「ゆがんだ愛」|同時間帯視聴率1位を23週連続獲得！ドロドロ復讐
1530 ショッピング情報|テレビショッピン
1559* 大宋宮詞 ～愛と策謀の宮廷絵巻～ 第40話|本格歴史ドラマ！耐えて、考えて、生き残る…平民から国を支える皇太后へ上り詰めた実在の女性・劉娥の
1700 お買い物チャンネル QVC LDL コレステロールが高めの方のサ
1759* 黒谷友香、お庭つくります アンコール 簡単！瞬
1827* ＃居酒屋新幹線 第8話「八戸編」（全12話）
1854 🈢速報ニュース
1900 中国時代劇 灼灼風流～宮中に咲く愛の華～ 第12話「進むべき道」（全38話）|『明蘭』のウィリアム・フォン
2000* 鶴瓶のええ歌やなぁ 特選集！長山洋子＆丘みどり アイドル出身歌手SP
2057 🈑宝くじドリー
2100 🈢インサイドOUT 日米首脳会談迫る！ 日本の国益守る 高市首相
2153* 桜前線2026 全国キャスターリレ
2200 🈢ショップチャンネル メリオン プレミアムな拘り素材で作るスプリングコレクション|ジャケットは長め
2300 宝塚カフェブレイク ＃1247「特別編」
2330 🈑太田和彦のふらり旅 新・居酒屋百選「長野・諏訪で酒蔵巡り
2400* 悲劇の元凶となる最強外道ラスボス女王は民の為に尽くしま
2430 お前ごときが魔王に勝てると思うな 第11話
2500* 絶品！お取り寄せクッキング
2530 音楽缶 ＃3786|最新の邦楽ミュージックビデオを、ノンストップで紹
2600 ごりやくさん 第36回「西宮神
2630 ごりやくさん 第37回「総集編」|全国各地の「御利
2700 ごりやくさん 第38回「金刀比羅
2730 ごりやくさん 第39回「吉備津神社」（岡山）|全国各地の「御利
2800* 中国時代劇 蘭陵王 第24話「馬賊討伐」（全46話）|「明蘭」のウィリアム・フォンが、美しき仮面の将軍`],
  ["12 BS12ト..", `
0500 山崎ていじのさわやか歌謡曲 #503|ぼくとつな司会の山崎ていじが毎
0530* 中国ドラマ 浮図縁～乱世に咲く真実の愛～第16話「夫婦のように」（字幕）|中国で人気急上昇中のワン・ホーデ
0625 テレビショッピング
0654 温泉日和 #16
0700* 中国ドラマ 七夜雪【リー・チン×ツォン・シュンシー豪華共演！】第16話（字幕）
0757 ふるさと グルメ
0800 QVC アウトドアブランド Carney（カーニー）|“ソトアソビコーディネーター”ユリエさんのライフスタイルをイメー
0900 QVC ヴィブリアン エスプリーナ by AHN MIKA|アン ミカさんオリジナルラインの「エスプリーナ」が登場。ヘアケアなど、こだわりの
1000 QVC 目利きが選んだ海の幸 ボイルほたて|「ヤマコ武田商店」から鮮度にこだわった海の幸をお届け。
1100 QVC アウトドアブランド Carney（カーニー）|“ソトアソビコーディネーター”ユリエさんのライフ
1200 QVC Permore 神秘の輝き テリ最強黒蝶真珠|上品な光沢や艶が、装いに気品を添える真珠のコレクション。その優
1300 QVC 春のマストバイ！ tegami|クラフト感やぬくもりを感じるディテールと、ふわっと優しいデザインが特徴。軽やかな着心地のブラウスなどが登場！
1400 QVC お昼はチェッQ！ワクワク14|ちょっとひと息、リラックスタイムのお楽しみ。毎日お昼14時は「ワク
1500 韓国ドラマ イ・サン【巨匠イ・ビョンフン監督作】第49話、第50話（字幕）|巨匠イ・ビョンフン監督作！朝鮮王朝史上、最も波乱万丈の生涯をおくったイ・サン、第22代王・正祖（チョンジョ）の半生を描くドラマ。（全77話）
1700 テレビショッピング|厳選した商品をご
1730 中国ドラマ 転生才女は恋ざかり！【日本初放送！ラブコメ時代劇】第12話（字幕）
1830 久住昌之のニッポン箸休めさんぽ #49、50、51
1900 ありがとう 第4シリーズ【肝っ玉かあさんこと京塚昌子出演！】第17話、第18話|東京・神田の学生街に古くからカレーライス屋、パン屋、下宿を営む三軒の家庭を舞台に新しい“ありがとう精神”を描く。（全52話）
2100* 船越英一郎の昭和再生F【山田パンダが巡るフォークソングブーム】🈑
2155 BS12ガイド
2200 QVC アウトドアブランド Carney（カーニー）|“ソトアソビコーディネーター”ユリエさんのライフスタイルをイメー
2300 QVC ヴィブリアン エスプリーナ by AHN MIKA|アン ミカさんオリジナルラインの「エスプリーナ」が登場。ヘアケアなど、こだわりの
2400 QVC SKECHERS（スケッチャーズ）|ロサンゼルス発の「スケッチャーズ」が登場！機能美と、ファッション性を兼ねたシュ
2500 QVC 「イコエル」次世代型ビューティギア|プロフェッショナルな技術と確かな美の変化を楽しめる美容ブランド
2600* アポカリプスホテル 第12話「銀
2630 鉄道アドベンチャー #7 静岡県・大井川鐵道
2700 BS12 MUSIC TRIP ～パリのマル
2730* 中国ドラマ 華麗なる転身～妻たちの逆襲～ 第10話（字幕）|クズ男に正義の鉄槌を！キャリアウ
2830 生駒尚子の“ガンバっ天然”そんぐふぁ～ゆ～ #16`],
  ["放送大学テレビ", `
0600 🈑住まいの環境論 第13回|「外構の環境計画」
0645 🈑住まいの環境論 第14回|「住みこなしの理論」
0730 🈑住まいの環境論 第15回|「持続可能な社会と住まい 未来に向けて」
0815 🈑より良い思考の技法 第13回|「実践4 防災減災とリスク認知を知る」
0900 🈑より良い思考の技法 第14回|「実践5 心理学と科学を考える」
0945 🈑より良い思考の技法 第15回|「実践6 充実した『学び』のために」
1030 🈑食と健康 第13回|「食物アレルギー」
1115 🈑食と健康 第14回|「食と生活習慣
1200 🈑食と健康 第15回|「食と高齢社会」
1245 🈑教養学部コースガイド2026
1300 授業科目案内「災害を乗り越
1315 筋トレ アカデミ
1330 🈑障害者の自立と制度 第10回|「障害者差別解消法を知る」
1415 🈑障害者の自立と制度 第11回|「教育を変える」
1500 🈑障害者の自立と制度 第12回|「就労を変える」
1545 🈑心理カウンセリング序説 第10回|「ロジャーズと来談者中心療法」
1630 🈑心理カウンセリング序説 第11回|「行動療法によるアプローチの展開」
1715 🈑心理カウンセリング序説 第12回|「認知行動療
1800 データサイエンス革命「3 経営における人工知能とデータサイ
1845 🈑教養学部コースガイド2026
1900 キャンパスガイド「退任教員か
1915 授業科目案内
1930 🈑色を探究する 第10回|「近代の美術と色彩1―画家たちが見出した色彩―」
2015 🈑色を探究する 第11回|「近代の美術と色
2100 🈑色を探究する 第12回|「表現された色・とらえる色―色の
2145 🈑初歩からの数学 第10回|「三角関数」
2230 🈑初歩からの数学 第11回|「場合の数」
2315 🈑初歩からの数学 第12回|「数列」
2400 -`],
  ["放送大学テレビ", `
0600 🈑生物の進化と多様化の科学 第13回|「有性生殖がも
0645 🈑生物の進化と多様化の科学 第14回|「性と進化」
0730 🈑生物の進化と多様化の科学 第15回|「人類の進化」
0815 🈑肢体不自由児の教育 第13回|「重複障害児の指導」
0900 🈑肢体不自由児の教育 第14回|「キャリア教育と進路指導」
0945 🈑肢体不自由児の教育 第15回|「新たな取り組みと今後の課題」
1030 🈑市民生活と裁判 第13回|「雇用をめぐる紛争とその解決（2）ハラスメントについて」
1115 🈑市民生活と裁判 第14回|「個人情報の保
1200 🈑市民生活と裁判 第15回|「市民生活と裁判のこれから」
1245 -
1330 🈑舞台芸術の魅力 第10回|「日本の伝統芸能−歌舞伎−」
1415 🈑舞台芸術の魅力 第11回|「日本の伝統芸能−能−」
1500 🈑舞台芸術の魅力 第12回|「日本の伝統芸能−人形浄瑠璃文楽
1545 🈑データの分析と知識発見 第10回|「回帰分析（3）」
1630 🈑データの分析と知識発見 第11回|「ニューラルネットワーク」
1715 🈑データの分析と知識発見 第12回|「サポートベク
1800 -`],
  ["グリーンチャンネル", `
0630 カラーバー・GCロゴ
0700 🈚がんばる！畜産！9 #6🈑|「なるほど！畜産
0730 🈚がんばる！畜産！7 #14🈑|「なるほど！畜産現場 明るい未来
0800 🈚がんばる！畜産！6 #14🈑|「なるほど！畜産
0830 🈚がんばる！畜産！5 #14🈑|「ドキュメント！
0900 🈚グリーンチャンネル傑作選（しょこたんの馬図鑑 グラスワンダー編） #134🈑|「中川翔子がグラ
1000 🈚新・馬学講座 ホースアカデミー #112🈑|「遂げた試競騎騎
1030 🈚Green Healing|大自然の中でのびのびと過ごす馬の
1100 🈚新・競馬ワンダラー5 #5🈑|八幡製鉄所があっ
1130 🈚草野仁のGate J.プラス（河村
1200 栄光の名馬たちセレクション（ドクタースパート）🈑|#25「ドクタースパート」
1300 栄光の名馬たちセレクション（サクラユタカオー）🈑|#26「サクラユタカオー」
1400 栄光の名馬たちセレクション（シスタートウショウ）🈑|#27「シスタートウショウ」
1500 水曜馬スペ！純烈・酒井一圭の馬めぐりPart.2🈑|「純烈・酒井一圭さんが馬産地を巡ります。」
1600 馬産地通信 #339🈑|「競走馬育産合競
1630 ザ・馬券DUEL WWW R #7🈑|コージ×TIM・ゴルゴ松本(1)
1700 競馬ブロス #149|馬好きブラザーズと藤懸貴志騎手の夜な夜な競馬談義
1800 先週の結果分析3 #11|「先週行われたレースをタイム面やレース内容等から鋭く分析！」
1900 スタリオンライブラリー #79🈑|「I Am Invincible、Written Tycoon
1930 競馬場の達人セレクション（コ
2000 重賞メモリアル #1003🈑|当該週に行われる重賞競走の過去のレース映像をお届けします。
2100 ザ・馬券DUEL WWW R #7🈑
2130 草野仁のGate J.プラス（河村清明 後編） #292🈑
2200 今週の調教 #896|「阪神大賞典、愛知杯、フラワーC、ファルコンS 他」
2300 トレセンまるごと情報局 #555|東西トレセンからの取れたて情報をお届け！
2400 競馬場の達人（アキナ 山名文和） #603🈑|「アキナ 山名文
2430 ザ・パトロールビデオ（場別） #895|「第2回中山競馬第5・6日、第1回阪神競馬第7・8日、第1回中京競馬第1・2日」
2730 今週の調教 #896|「阪神大賞典、愛知杯、フラワーC、ファルコンS 他」
2830g トレセンまるごと情報局 #555|東西トレセンからの取れたて情報をお届け！`],
  ["BSアニマックス", `
0500 🈑ルパン三世(PART2) ベストセレクション|#61「空飛ぶ斬鉄剣」ルパン三
0530 情報|この時間は情報番組をお送りしております。
0600 🈑薬屋のひとりごと #33|#33「先帝」 帝の
0630 🈑名探偵コナン #989|#989「言えない目
0700 🈑Dr.STONE第3期 #13,14|#13「メデューサの素顔」 #14「頭脳戦のディールゲーム」 全人類が、謎の現象により一瞬で石化して
0800 🈑モンキーターン #1,2|#1「ナンバーワンになる！」 #2「競艇場で会おうぜ！」 モンキーターンとは、競艇においてボートを
0900 🈑こちら葛飾区亀有公園前派出所 #115,116|#115「逆襲罰当たりジジィ」 #116「走れ!麗子の大追跡」 葛飾区の亀有公園前派出所
1000 🈑僕のヒーローアカデミア #14,15|#14「そういうことね お茶子さん」 #15「うなれ体育祭」 ある事
1100 🈑キングダム 第2シリーズ #12,13|#12「高狼城攻略」#13「俺の戦(や)り方」 紀元
1200 🈑夏目友人帳 参 #13 END|#13「夏目遊戯帳」END 妖怪が
1230 🈑夏目友人帳 肆 #1
1300 🈑よふかしのうた #1,2|第1夜「ナイトフライト」 第2夜「てかラインやってる？」 女子がニガテな中学2年生の夜守コウはただ何となく、ふとした
1400 🈑薬屋のひとりごと #33|#33「先帝」 帝の母である皇太后、
1430 情報|この時間は情報番組をお送りしてお
1500 🈑SPY×FAMILY（スパイファミリー） #21,22|MISSION:21,22「<夜帷(とばり)>／はじめての嫉妬」「地下テニス大会 キャンベル
1600 🈑僕のヒーローアカデミア #14,15|#14「そういうことね お茶子さん」 #15「うなれ体育祭」 ある事件をきっかけにNo.1ヒーローのオールマイトから力を
1700 🈑夏目友人帳 参 #13 END|#13「夏目遊戯
1730 🈑夏目友人帳 肆 #1|#1「とらわれた夏
1800 🈑Dr.STONE第3期 #13,14|#13「メデューサの素顔」 #14「頭脳戦のディールゲーム」 全人類
1900 🈑ハニーレモンソーダ #2|#2「宝物に変わってく」 中学時
1930 🈑薬屋のひとりごと #33
2000 🈑SPY×FAMILY（スパイファミリー） #21,22|MISSION:21,22「<夜帷(とばり)>／はじめての嫉妬」「地下テニス
2100 🈑キングダム 第2シリーズ #12,13|#12「高狼城攻略」#13「俺の戦(や)り方」 紀元前、中国。春秋
2200 🈑夏目友人帳 参 #13 END|#13「夏目遊戯
2230 🈑夏目友人帳 肆 #1|#1「とらわれた夏目」 妖怪が見え
2300 🈑モンキーターン #1,2|#1「ナンバーワンになる！」 #2「競艇場で会おうぜ！」 モンキーターンとは、競艇においてボートを
2400 🈑よふかしのうた #1,2|第1夜「ナイトフライト」 第2夜「てかラインやってる？」 女子がニガテな中学2年生の夜守コウはた
2500 🈑SPY×FAMILY（スパイファミリー） #21,22|MISSION:21,22「<夜帷(とばり)>／はじめての嫉妬」「地下テニス
2600 🈑僕のヒーローアカデミア #14,15|#14「そういうことね お茶子さん」 #15「うなれ
2700 🈑ハニーレモンソーダ #2
2730 🈑モンキーターン #1,2|#1「ナンバーワンになる！」 #2「競艇場で会おうぜ！」 モンキーターンとは、競艇においてボートを
2830r 🈑よふかしのうた #1,2|第1夜「ナイトフライト」 第2夜`],
  ["J SPORTS 1", `
0300 休止|この時間は放送を休止しています。番組に関する詳細は下記ホームページまで www.jsports.co.jp
0600 [無料]ラグビーわんだほー！～ラグビー情報番組～ #123|最新情報の「ニュースジャッカル」や、好プレー珍プ
0700 ワールド・オブ・フリースポーツ #2【カヤッ
0730 【45分】ラグビーリーグワン2025-26 D1 第11節 BR東京×静岡|＜Ball in play ハイライト＞ ～D1
0815 【45分】ラグビーリーグワン2025-26 D1 第11節 神戸×相模原|＜Ball in play ハイライト＞ ～D1
0900 インフォメーション|暮らしに役立つ情報番組
0930 [無料]まるっとバレーボール ～大同生命SVリーグ情報番組～#19|SVリーグの情報
1015 [無料]SUPER G
1030 プロバスケ Bリーグ 2025-26 第26節-2 三遠×北海道(3/15)|10年目の節目を迎える2025-26のBリーグ。 チーム、観客が一体となって生み出される「ココロ、たぎる。」瞬間に注目！ 三遠ネオフェニックス×レバンガ北海道
1300 原田伸郎のめざせパーゴルフ3 #1389【ハッピーゴルフアワー】
1330 [無料]インフォメーション|暮らしに役立つ情報番組
1400 桑田泉のゴルフアカデミー シーズン1 #12【ハッピーゴルフアワー
1430 【内藤智文、W杯初優勝！】スキージャンプ FIS W杯25/26 オスロ(3/15)|【男子LH】 世界各地を転戦するFIS ワールドカップは五輪、世界選手権と並び重要な大会に位置付けられる。 小林陵侑らSNOW JAPANの活躍に注目！
1630 ジャパンラグビー リーグワン2025-26 D2 第8節 釜石SW×RH大阪|国内最高峰のラグビーリーグ！世界トップクラスのプレーに注目！ 釜石シーウェイブス×レッドハリケーンズ大阪
1900 ジャパンラグビー リーグワン2025-26 D1 第11節 トヨタV×浦安DR|国内最高峰のラグビーリーグ！世界トップクラスのプレーに注目！ トヨタヴェルブリッツ×浦安D-Rocks
2130 ジャパンラグビー リーグワン2025-26 D1 第11節 東京SG×BL東京|国内最高峰のラグビーリーグ！世界トップクラスのプレーに注目！ 東京サンゴリアス×東芝ブレイブルーパス東京
2400 バレー大同生命SVリーグ25-26 女子第19節 SAGA久光×姫路(3/15)|シーズン終盤戦、勝利への思いが強い両者の激突！圧倒的な人気と実力を誇るアウトサイドヒッター北窓絢音(SAGA久光)と野中瑠衣(姫路)の打ち合いに注目！
2700g 休止|この時間は放送を休止しています。番組に関する詳細は下記ホームページまで www.jsports.co.jp`],
  ["J SPORTS 2", `
0300 休止|この時間は放送を休止しています。番組に関する詳細は下記ホームページまで www.jsports.co.jp
0600 【内藤智文、W杯初優勝！】スキージャンプ FIS W杯25/26 オスロ(3/15)|【男子LH】 世界各地を転戦するFIS ワールドカップは五輪、世界選手権と並び重要な大会に位置付けられる。 小林陵侑らSNOW JAPANの活躍に注目！
0800 杏ちゃん＆しんやのラグビーはじまるよ！2026
0830 【45分】ラグビーリーグワン2025-26 D1 第11節 トヨタ×浦安|＜Ball in play ハイライト＞ ～D1
0915 【45分】ラグビーリーグワン2025-26 D1 第11節 BR東京×静岡
1000 結束！侍ジャパン #130|トップチームはもちろん、大学・高
1030 インフォメーション|暮らしに役立つ情
1100 第46回全国中学校スケート大会 フィギュアスケート 男子SP【ハイライト】|数々のスター選手
1200 第46回全国中学校スケート大会 フィギュアスケート 男子FS【ハイライト】|数々のスター選手たちを輩出してき
1300 [初]ツール・ド・フランス2025 第21ステージ Cycle*【2時間でおさらい！】|【マント・ラ・ヴィル～パリ・シャンゼリゼ】 解説：栗村修、フローラン・ダバディ 実況：長澤洋明 開催日：2025年7月27日(現地)
1500 [無料]まるっとバレーボール ～大同生命SVリーグ情報番組～#1
1545 [無料]SUPER GT 2026 公式ガイド
1600 バレー大同生命SVリーグ25-26 女子第19節 SAGA久光×姫路(3/15)|シーズン終盤戦、勝利への思いが強い両者の激突！圧倒的な人気と実力を誇るアウトサイドヒッター北窓絢音(SAGA久光)と野中瑠衣(姫路)の打ち合いに注目！
1900 ツアー・オブ・オマーン2026 ハイライト Cycle*|中東オマーンで開催されたUCI Proシリーズのステージレース、ツア
2000 [解]J SPORTS HOOP!2026 学生バスケ情報番組
2030 [初]バスケ スプリングマッチ2026 #5 専修大学×東山|【高校バスケ強豪校が大学生に挑む！】 高校生と大学生のプライドがぶつかり合うスペシャルマッチが実現！
2200 [無料][初]高円宮杯 JFA U-18 サッカープレミアリーグ2026 ナ
2245 [無料]ラグビーわんだほー！～ラグビー情報番組～ #123|最新情報の「ニュースジャッカル」や、好プレー珍プレーなどラグビー情報満載！ コメンテーター：村上
2345 【45分】ラグビーリーグワン2025-26 D1 第11節 東京ベイ×埼玉|＜Ball in play ハイライト＞ ～D1
2430 [無料]SAIL GP 2026 第3戦 シドニー【ハイライト】|「海のF1」や「空飛ぶヨットレース」とも例えられ、海岸近くで行われるレースは迫力満点。世界各地の港を舞台に、スピード感溢れるレースと興奮を見逃すな！
2630 MOTOR GAMES #624|車＆バイクによる
2700g 休止|この時間は放送を休止しています。番組に関する詳細は下記ホームページまで www.jsports.co.jp`],
  ["J SPORTS 3", `
0300 休止|この時間は放送を休止しています。番組に関する詳細は下記ホームページまで www.jsports.co.jp
0600 MOTOR GAMES #624|車＆バイクによる
0630 インフォメーション|暮らしに役立つ情
0700 ツール・ド・フランス2025 第4ステージ Cycle*【2時間でおさらい！】|【アミアン・メトロポール～ルーアン】 リモート解説：畑中勇介 解説：河野翔輝 実況：永田実 開催日：2025年7月8日(現地)
0900 WRC世界ラリー選手権2026 第3戦 ケニア ライブステージ【SS15】|WRCはFIAが主催するラリーの世界
1000 [無料]ラグビーわんだほー！～ラグビー情報番組～ #123|最新情報の「ニュースジャッカル」や、好プレー珍プ
1100 インフォメーション|暮らしに役立つ情
1130 プロ野球2026 オリックス×広島(3/18)【オープン戦】|球春到来！公式戦開幕前のチーム状態をオープン戦で要チェック！ オリックス・バファローズ×広島東洋カープ
1430 MOTOR GAMES #624
1500 FIAフォーミュラE世界選手権2025/26 第5戦【予選】ジェッダ|最先端の技術と世界のトップドライバーたちが融合する新時代のモータースポーツ、FIA フォーミュラE世界選手権。
1700 FIAフォーミュラE世界選手権2025/26 第5戦【決勝】ジェッダ|最先端の技術と世界のトップドライバーたちが融合する新時代のモータースポーツ、FIA フォーミュラE世界選手権。
1900 バレー大同生命SVリーグ25-26 男子第17節 WD名古屋×東京GB(3/14)|年明けからさらに快進撃を続けるWD名古屋と、CS進出へ向けて一戦必勝で挑む東京GBが激突！どちらが勝利を掴むのか注目の一戦！
2200 プロバスケ Bリーグ 2025-26 第26節-1 琉球×長崎(3/14)|10年目の節目を迎える2025-26のBリーグ。 チーム、観客が一体となって生み出される「ココロ、たぎる。」瞬間に注目！ 琉球ゴールデンキングス×長崎ヴェルカ
2430 SUPER GT FESTIVAL 2026|2026年の開幕を前に、SUPER GTの面白さを再確認！ SUPER GTを題材に、お祭りモードでオフを楽しむ生放送2時間スペシャル！
2630 [解]J SPORTS HOOP!2026 学生バスケ情報番組
2700g 休止|この時間は放送を休止しています。番組に関する詳細は下記ホームページまで www.jsports.co.jp`],
  ["J SPORTS 4", `
0315 休止|この時間は放送を休止しています。番組に関する詳細は下記ホームページまで www.jsports.co.jp
0600 ジャパンラグビー リーグワン2025-26 D2 第8節 九州KV×花園L|国内最高峰のラグビーリーグ！世界トップクラスのプレーに注目！ 九州電力キューデンヴォルテクス×花園近鉄ライナーズ
0830 ジャパンラグビー リーグワン2025-26 D1 第11節 東京SG×BL東京|国内最高峰のラグビーリーグ！世界トップクラスのプレーに注目！ 東京サンゴリアス×東芝ブレイブルーパス東京
1100 SUPER GT 2025 一挙放送！第2戦【決勝】富士スピードウェイ|富士スピードウェイは、世界に名の知れた高速コース。約1.5kmに及ぶメインストレートに後半の上り勾配の連続コーナーは攻略が難しい。【4月11日新シーズン…
1500 ドキュメンタリーThe REAL アルバルク東京 ～キャプテン・ザック選手の秘密～|【アルバルク東京4000kmを行く】
1600 [無料]ラグビーわんだほー！～ラグビー情報番組～ #123|最新情報の「ニュースジャッカル」や、好プレー珍プレーなどラグビー情報満載！ コメ
1700 [初]ISU世界ジュニアフィギュアスケート選手権2026 ペア|トップスケーターへの登竜門とも言われるジュニア世代で最高峰の大会。次世代を担う選手たちの華麗なる演技に注目！ 解説：岡部由起子 実況：赤平大
2000 ミラノ～トリノ2026 Cycle*|1876年に初開催された世界最古のワンデークラシック「ミラノ～トリノ」。モニュメント「ミラノ～サンレモ」の前哨戦！リモート解説：辻啓 実況：谷口廣明
2230 Arenberg Cycling 編集部TV2026 Cycle*|【増刊号】 3月、4月に開催されるレースの見どころ、予想＆放送予定を発信！ ゲス
2330 [解]J SPORTS HOOP!2026 学生バスケ情報番組 #2
2400 高校バスケ ウインターカップ2025 #59 女子決勝 桜花学園×大阪薫英女学院|高校No.1を決定するバスケの冬の祭典ウインターカップ。 J SPORTSでは、熱き高校生達の戦いの軌跡を徹底放送！
2600 [無料]高円宮杯 JFA U-18 サッカープレミアリーグ2026 ナビ
2645 [無料]SUPER G
2700g 休止|この時間は放送を休止しています。番組に関する詳細は下記ホームページまで www.jsports.co.jp`],
  ["BS釣りビジョン", `
0500 SALT X 56 東京湾 真冬のタイラバ|旬の海のルアーゲームをお届けする『SALT X』。今回は、東京湾の遊漁船キャプテンであり、タイラバゲームのエキスパート・中村彩が登場。ホームで迎える
0600 アナタに釣っていただきます！ 35 長谷文彦|お馴染みの釣り名人が、ジャンルや釣り方に捉われず、様々な釣りに
0700 RAD SALT 9 山口シーバスゲーム|RAD(ヤバい)な瞬間を求めて、オカッパリのみで全国のフィールドにチャレンジする『R
0800 フリースタイルフィッシャーズ 5 徳島／シーバス|ビッグベイター・奥田学が、国内外の海や淡水を舞台
0900 こちら東海です。DX 5 駿河湾アマダイ
0930 ブレイクタイム|季節に合わせた様々な内容をお届けします。
1000 🈖SOUL JERKER 29 甑島×厳寒期|テーマはブラスワンエギング。これまで釣れなかったアオリイカを釣る
1100 海釣り幕営 8 島原半島のシーバス|釣りと共に野営することをモットーとするソルトルア
1200 🈖Rock'n Fish 98 沖縄国頭ゲーム|ロックフィッシュゲームの奥深さや楽しさを追求していく『Rock’n Fi
1300 ブレイクタイム|季節に合わせた様々な内容をお届けします。
1330 今が釣れドキ！中四国 13 カワハギ釣り
1400 なるほど！沖釣りマスター 30 阿南のカワハギ|沖釣りマスターと呼ばれる二人が『なるほど』をキーワードに裏技か
1500 【リクエスト】オトコの釣りメシ 2 千葉県外房 大原沖のマダイ|ウエカツこと上田勝彦が釣り人にしか味わえない極上の魚料理法を伝授
1600 ブレイクタイム|季節に合わせた様々な内容をお届
1630 発見！すごかby九州 #13 天草 メバル|日本各地の釣りガールたちが身近な釣りを紹介する
1700 とことんエギパラダイス 159 三代目の重大発表！|今回のエギパラは、4年6カ月もの間、三代目とな
1800 🈖魚種格闘技戦！ 287 境水道キャスティング|全世界をフィールドにあらゆる魚族に挑むフィッシン
1900 SALT Dreamer 95 宮城県 磯マル|プロアングラー鈴木斉が世界を舞台に夢のビッグワンを追い求める実釣
2000 GTに人生を捧げた男 2 パラオ・ヘレン環礁 後編|GTガイド船ビッグディッパーのキャプテンであり、なおかつGTアン
2100 🈟アジングへ行こう！ 54 和歌山・中紀をランガン！|今回の『アジングへ行こう！』は、
2200 オフショアレボリューションNEXT 162 錦江湾|沖釣り界の新たな発見、そして革命を目指す『オフショアレボリューシ
2300 【春めく季節のオカッパリ攻略特集】RAD SALT 21 愛知三重シーバスゲーム|RAD（ヤバい）な瞬間を求めてオカッパリのみで全
2400 こちら東海です。DX 32 泳がせ釣り|大物源魚恋を泳
2430 今が釣れドキ！中四国 6 高松メバリング
2500 follow my F 33 広島県帝釈峡神龍湖|陸っぱりバスフィッシングのレジェンド・川村光太郎が“世界最高”を
2600 IGNITION 8 宮崎 島野浦の寒グレ2026|磯釣りファンから絶大な支持を得る猪熊博之。そんな
2700 渓流ギャラリー テンカラで感ずる春の息吹～東京の秘境・日原川～|日本古来の釣り“テンカラ”を
2800 マイスターズ 三つ星フィッシング 1 杉田千紘|様々なジャンルの釣りのインフルエンサー・アングラーズマイスターが登場し、ゲストと`],
  ["WOWOWプラス", `
0430* 🈙天使のくれた時間|ニコラス・ケイジ主演のハートウォーミングなファンタジー。ふたつの人生を生きることで本当の幸せを知る男の物語。監督は『ラッシュアワー』のブレット・ラトナー。
0645 宮廷女官 若曦（ジャクギ） #23（全35話）|現代の女性が突然タイムスリップした先は18世紀初頭・清の時代、出会ったのは美しき
0745* 🈙Mr.&Mrs. スミス|ブラッド・ピットとアンジェリーナ・ジョリーが共演した、ロマンティックアクションの大ヒット作。美男美女のスミス夫妻だが、実は対立し合う組織の凄腕殺し屋だった……?
1000* 🈙鬼平犯科帳（1995）◆中村吉右衛門 主演|池波正太郎の原作をもとに、火付盗賊改方・長谷川平蔵の活躍を颯爽と描写。人気TV時代劇『鬼平犯科帳』を、TV版と同じ中村吉右衛門の主演で映画化した、話題の時代
1200 永遠の桃花～三生三世～ #31（全58話）|何度生まれ変わっても、私は貴方とめぐり会う――三世に渡る一途な純
1300 みみより生活情報
1330 ソールズベリ 毒殺未遂事件 #4（全4話）|2018年3月、英国ソールズベリで猛毒の神経剤による元スパイ毒殺未遂事件が発生。化学
1430* 🈙関ヶ原 ◆岡田准一 主演|岡田准一が義を重んじる戦国武将・石田三成を演じた、司馬遼太郎原作の時代劇。“関ヶ原の戦い”で西軍と東軍が運命を懸けて激戦を展開。有村架純、役所広司らが豪華共演
1715* 🈙ブレイク・タウン|『L.A.コンフィデンシャル』などの人気俳優ガイ・ピアースが主演したポリスアクション。武装ギャングに占拠された地方の町で、ベテラン
1900* 🈙誘拐の掟|リーアム・ニーソンが主演したサスペンス。過去を悔いながら生きる、元警官で無免許の私立探偵マット。彼は連続誘拐殺人事件の犯人2人組を巧みな交渉術で追い詰めていく。
2100 連続ドラマW アキラとあきら #1～5（全9話）◆向井理、斎藤工 出演|池井戸潤の原作をドラマ化。自らの意志で人生を選んできたエリートと、自らの能力で人生を切り開いてきた天才2人の“宿命”を描くヒューマンドラマ。（全9話）
2535y 連続ドラマW アキラとあきら #6～9（全9話）◆向井理、斎藤工 出演|池井戸潤の原作をドラマ化。自らの意志で人生を選んできたエリートと、自らの能力で人生を切り開いてきた天才2人の“宿命”を描くヒューマンドラマ。（全9話）`],
  ["日本映画専門ch", `
0500 僕の歩く道（全11話）#4 【あさ4時の名優劇場】|出演：草なぎ剛／香里奈 自閉症の青年が懸命に生きる姿を描いたドラマ（2006年 47分）
0555 🈙先祖になる【風化させてはならない3.11の記録 ～東日本大震災から15年～】|監督：池谷薫 東日本大震災からの復興に奮闘する姿を追ったドキュメンタリー（2013年 119分）
0800 あらばしり（全12話）#3|出演：藤原樹(TH
0830 あらばしり（全12話）#4|出演：藤原樹(TH
0900* 🈙騙し絵の牙|出演：大泉洋／松岡茉優／佐藤浩市 監督：吉田大八 次期社長の座を巡って陰謀渦巻く大手出版社を舞台にした、エンタテインメント・ミステリー。（2021年 113分）
1100 女王の教室（全11話）#7-8|出演：天海祐希／羽田美智子／原沙知絵／尾美としのり／夏帆／半海一晃 ※放送時間の詳細は日本映画専門チャンネルHPへ 「日本映画」で検索！
1300 西村京太郎スペシャル 亀井刑事・十津川警部 トラベルサスペンス|出演：小林稔侍／萩原健一／国生さゆり 原作：西村京太郎 亀井刑事と十津川警部がノンストップ殺人列車の特命捜査に挑む！
1530 信濃のコロンボ事件ファイル4「戸隠伝説殺人事件」（主演・中村梅雀）|出演：中村梅雀／里見浩太朗／原日出子 長野県警捜査一課警部・竹村岩男＝別名「信濃のコロンボ」が難事件を解決する。
1730 松本清張特別企画 聞かなかった場所（主演・名取裕子）【おとなのサスペンス劇場】|出演：名取裕子／酒井美紀／大杉漣 社会派推理小説の巨匠・松本清張原作のサスペンスドラマ。
1930* 🈙ダイナマイトどんどん 【没後5年・田中邦衛～名優の記憶をたどる旅～】|出演：菅原文太／北大路欣也／宮下順子 監督：岡本喜八 地元ヤクザの抗争を民主的に解決しようと野球大会が開かれるが…。（1978年 143分）
2200* 🈙明日を綴る写真館 【日曜邦画劇場・再】|出演：平泉成／佐野晶哉(Aぇ! group) ベテランカメラマンと若手カメラマンの交流を温かく描く。 ※軽部支配人の解説（2024年 105分）
2410 世にも奇妙な物語 傑作選 #3「倦怠期特効薬」/「零差値教育」|「世にも奇妙な物語」『倦怠期特効薬』 出演：ユースケ・サンタマ
2510 アナザーフェイス 刑事総務課・大友鉄（主演・仲村トオル）|出演：仲村トオル／黒谷友香／宇崎竜童 脚本：中園健司 人気作家・堂場瞬一の警察小説を、仲村トオル主演でテレビドラマ化。（2012年 9
2705 やれたかも委員会（全8話） #3
2740 ロケ地探訪 旅めぐり #4 京都・祇園/下鴨編
2800 僕の歩く道（全11話）#5 【あさ4時の名優劇場】|出演：草なぎ剛／香里奈／佐々木蔵之介 先天性障害で10歳児程度の知能しかない31歳の`],
  ["ディズニーch", `
0400 ヒカルの碁#33-36|#33「第三十三局 チーム結成!」ほか。祖父の家の蔵で古い碁盤を見つけたことで、平安時代の美丈夫、藤原佐為と出会った進藤ヒカル。突如、佐為の魂がヒカルに宿り…。
0600 ミッキーマウス クラブハウス#20🈔
0630 ラプンツェル ザ・シリーズ#17🈔
0700 ブルーイ#1🈔|#1「ふうせんラリー／まほうのもっ
0730 フィニアスとファーブ#75🈔|#75「ママ、後ろを向いて／ドライ
0800 ドックはおもちゃドクター#83
0825 ちいさなプリンセス ソフィア#3
0855 ミッキーマウ
0900 ライオン・ガード#40🈔|#40「あさのほうこく」
0930 ハイ・ホー7D#39🈔|#39「イライラプ
1000 ミッキーマウス ファンハウス#28🈔|#28「ぼくらうう
1030 ブルーイ#8🈔|#8「キャリーワゴンであそぼう／タ
1100 ベイマックス ザ・シリーズ#25🈔
1130 ふしぎの国 アンフィビア#56🈔
1200 ウェイバリー通りのウィザードたち#95🈔|#95「タイムマシ
1230 ウェイバリー通りのウィザード
1300 シェキラ！#23🈔|#23「飛べ！空高く パート2」
1330 シェキラ！#24🈔|#24「悪いのはどっちだ」
1400 シェキラ！#25🈔|#25「おかしな三つの願い」
1430 プーさんといっしょ#8🈔
1500 ミッキーマウス クラブハウス#52🈔
1530 スティッチ！#23|#23「眠れる森のエンジェル」
1600 ブルーイ#13🈔|#13「おとまりかい／かくれんぼ／
1630 ブルーイ#14🈔|#14「ふうふごっ
1655 ミッキーマウス！#41🈔|#41「お花が困ヌ
1700 キフ#50🈔|#50「つるつるヒルズ／トレバーと
1730 キフ：ロード・オブ・ザ・リングライト🈔
1800 101匹わんちゃんストリート#24
1830 101匹わんちゃんストリート#25🈔
1900 スイート・ライフ#21🈔|#21「愛の押し売り！」
1930 スイート・ライフ#22🈔
2000* ピーター・パン🈔|ウェンディの部屋に、いつまでも12歳のままの不思議な少年ピーター・パンとティンカー・ベルがやってきて、ネバー
2130 ピクルスとピーナッツ#31🈔|#31「友情の歌／
2200 モブサイコ100 III#9-10|#9「モブ1 ～引っ越し～」冬休みが明けていきなり、衝撃がモブを襲う。ツボミが来月末に転校するという
2300 SHIROBAKO#11-12|#11「原画売りの少女」、#12「えくそだす・クリスマス」5人の夢追う女の子を中心に、アニメ業界の日常を描く夢追い
2400 ヒカルの碁#37-40|#37「第三十七局 本戦開始」ほか。祖父の家の蔵で古い碁盤を見つけたことで、平安時代の美丈夫、藤原佐為と出会った進藤ヒカル。突如、佐為の魂がヒカルに宿り…。
2600 モブサイコ100 III#9-10|#9「モブ1 ～引っ越し～」冬休みが明けていきなり、衝撃がモブを襲
2700 SHIROBAKO#9-10|#9「何を伝えたかったんだと思う？」、#10「あと一杯だけね」5人の夢追う女の子
2800r ヒカルの碁#37-40|#37「第三十七局 本戦開始」ほか。祖父の家の蔵で古い碁盤を見つけたことで、平安時代の美丈夫、藤原佐為と出会った進藤`],
  ["J:COM BS", `
0500 テレビショッピング|おうちでショッピング！毎日選りすぐりの商品をご紹
0530 中国◇独孤伽羅～皇后の願い～ #13 危険な噂（字幕版）|愛のない婚姻から運命を変える愛へ――！ 乱世の中、欲望と策略に翻弄されながらも、夫を隋の初代
0630 テレビショッピング|おうちでショッピ
0700 韓国◇キルミー・ヒールミー #5 孤独な闘い（字幕版）|チソン×ファン・ジョンウムが共演！記憶との“再会”によって二人
0800 テレビショッピング|おうちでショッピ
0830 リマーカブル・リビング 「女性を美しく幸せに
0900 ふくあじ 千葉・我孫子「コ・ビアン」／神奈川・横浜「洋食
0930 テレビショッピング|おうちでショッピ
1000 中国◇長安 賢后伝 #46 玉璧の暗示（字幕版）|チョン・イー×チャオ・インズ主演！ひとりの女性の波乱の生涯を描
1100 テレビショッピング|おうちでショッピ
1130 韓国◇王は愛する #9（字幕版）|イム・シワン×ユナ＜少女時代＞×ホン・ジョンヒョン出演！高麗時代
1230 テレビショッピング
1300 事件記者・三上雄太2🈑|水谷豊が週刊誌記者を演じるサスペンスドラマシリーズ！
1500 テレビショッピング|おうちでショッピ
1530 韓国◇キルミー・ヒールミー #6 ヤツを眠らせろ（字幕版）|チソン×ファン・ジョンウムが共演！記憶との“再会”によって二人
1630 テレビショッピング|おうちでショッピング！毎日選りすぐりの商品をご紹介します
1700 中国◇独孤伽羅～皇后の願い～ #16 暗殺の宴（字幕版）|愛のない婚姻から運命を変える愛へ――！ 乱世の
1800 テレビショッピング
1830 京都の芸者弁護士事件簿2|涼風真世が演じる藤浪清香は京都・祇園で働く芸者でもあり実は弁護士という大人気シリーズ！
2030 山ねずみロッキーチャック #35 グラニーばあさ
2100 山ねずみロッキーチャック #36
2130 最近どう？ #32|吉幾三、山本譲二、香西かおりの3人による爆笑カ
2200 キイハンター #123 私たちは死にたくない🈑|元スパイの黒木、津川、元新聞記者の風間、スピード狂の島らが所属す
2300 韓国◇王は愛する #9（字幕版）|イム・シワン×ユナ＜少女時代＞×ホン・ジョンヒョン出演！高麗時代を舞台に三人の男
2400 三食ごはん #9|韓国の人気俳優イ・ソジンと2PMのテギョンが自給自足の田舎ライフを送るシリーズ第1弾！
2600 最近どう？ #88|吉幾三、山本譲
2630 小泉孝太郎が女子プロと本気（マジ）ゴル
2700 ふくあじ 神奈川・横浜「洋食
2730 キイハンター #29 その名は女番外地🈑|元スパイの黒木、津川、元新聞記者の風間、スピード狂の島らが所属する、国際警察の秘
2830 こちらJ：COM 安心安全課 【#24】～防災士編～`],
  ["ＢＳよしもと", `
0500 テレビショッピング|【テレビショッピング】をお送りします。
0530 🈑おはよう歌謡曲 #94|この時間は厳選した歌謡曲をラインナップ！ 今でも語り継がれるレジ
0600 お買い物情報|この時間は暮らしに役立つお買い物
0630 🈢ウェザーニュースLiVE|日本国内各地に設
0700 お買い物情報|この時間は暮らしに役立つお買い物
0730 🈑Y-Tube大賞(3/12)|よしもと芸人のYouTubeチャンネルの中から、おもしろ動画を紹介していくY-Tube大賞！MCと一緒に動画を見ていく
0830 お買い物情報|この時間は暮らしに役立つお買い物情報をお届けしま
0900 🈑おはよう歌謡曲 #91|この時間は厳選し
0930 お買い物情報|この時間は暮らしに役立つお買い物情報をお届け
1000 🈑おもてなしグルメ旅 #2|北海道出身のタカアンドトシが、北海道のとにかく美味しいものをおもてなしするグルメロケバラエティ
1100 お買い物情報|この時間は暮らしに役立つお買い物
1130 🈑若手創作落語の会～よしもと
1200 お買い物情報|この時間は暮らしに役立つお買い物情報をお届けしま
1230 🈑亜生とナダルがゆる～く釣り
1300 🈢発信Live ジモトノチカラ！(3/19)|日本全国の“ジモト”の魅力をたっぷりお届けする3時間の生放送。 おススメスポット、グルメ、イベントなどの情報を47都道府県から「住みます芸人」が熱くレポー...
1600 🈑お笑い花月劇場 逆転サヨナラ大エラー|1965年から1986年まで放送されていた「なんば花月」の吉本新喜劇！ 出演者：間寛平、チャーリー浜、島木譲二、池乃め
1700 お買い物情報|この時間は暮らしに役立つお買い物
1730 🈑又吉・せきしろのなにもしない散歩 #205
1800 お買い物情報|この時間は暮らし
1830 🈑東野・岡村の旅猿25 プライベートでごめんな
1900 🈢ショップチャンネル(3/19) ミミコプラス 魅力的に輝くスタイル|ファッション/国内外から取り
2000 🈑ダイアンのガチで！ごめんやす #201
2030 🈑よしもと新喜劇(2014～) 茂造のメイド喫茶で萌え～！|笑いどころ満載となっている「よし
2130 お買い物情報|この時間は暮らしに役立つお買い物情報をお届けしま
2200 🈑BSよしもとpresents 吉本新喜劇 #24|「最後の姉妹喧嘩、俺がとめるんか～い！」 旅館番頭の吉田裕は突
2300 お買い物情報|この時間は暮らしに役立つお買い物
2330 🈑Y-Tube大賞(3/19)|よしもと芸人のYouTubeチャンネルの中から、おもしろ動画を紹介していくY-Tube大賞！MCと一緒に
2425 🈑ガングリオン
2430 🈑それゆけ！大宮セブン #199|大宮ラクーンよし
2500 テレビショッピング
2530 🈑石田靖とぶらりで笑 #137|吉本新喜劇でおなじみ石田靖が大
2600 テレビショッピング
2630 発信Live ジモトノチカラ！(3/12)|日本全国の“ジモト”の魅力をたっぷりお届け！ おススメスポット、グルメ、イベントなどの情報を47都道府県から「住みます芸人」が熱くレポートします。
2830 🈑地域発！ど・ろーかるNEWS(3月第2週)|地域密着のCATV`],
];

const GRID_TOP = 195;

function parsePrograms(text) {
  const rows = text.trim().split("\n").map((line) => {
    const [, time, flag, rest] = line.match(/^(\d{4})([*gbyrp]?) (.*)$/);
    const [title, description] = rest.split("|");
    return { time: Number(time), minute: time.slice(2), flag, title, description };
  });
  return rows.map((row, i) => {
    const end = rows[i + 1] ? rows[i + 1].time : 2900;
    return { ...row, height: slotTops.get(end) - slotTops.get(row.time) };
  });
}

const Logo = () => (
  <svg width="52" height="22" viewBox="0 0 52 22">
    <path
      d="M26 3C16 0 2 3 1 10c-1 7 12 11 24 8l1-8H15l-1 3h6l-1 2C12 17 6 14 7 10c1-5 10-6 17-4z"
      fill="#f6c81c"
    />
    <text x="27" y="19" fontSize="12" fontWeight="bold" fontFamily="Liberation Sans" textLength="24" lengthAdjust="spacingAndGlyphs" fill="#f8d44a">
      GUIDE
    </text>
  </svg>
);
const SearchIcon = () => (
  <svg width="19" height="19" viewBox="0 0 19 19" fill="none" stroke="#222">
    <circle cx="7.5" cy="7.5" r="5.3" strokeWidth="2.6" />
    <path d="M11.5 11.5l5.5 5.5" strokeWidth="3.4" strokeLinecap="round" />
  </svg>
);
const Caret = () => (
  <svg width="10" height="6" viewBox="0 0 10 6">
    <path d="M0 0h10L5 6z" fill="#c4c4c4" />
  </svg>
);
const Chevron = () => (
  <svg width="10" height="7" viewBox="0 0 10 7" fill="none" stroke="#000" strokeWidth="2">
    <path d="M1 1l4 4 4-4" />
  </svg>
);
const PlayIcon = () => (
  <svg width="14" height="14" viewBox="0 0 14 14">
    <circle cx="7" cy="7" r="6.5" fill="#fff3df" />
    <path d="M5.2 4v6l4.6-3z" fill="#e08f35" />
  </svg>
);

const ProgramCell = ({ program }) => {
  const next = /[gbyrp]/.test(program.flag);
  const missed = program.flag === "*";
  return (
    <Program $next={next} style={{ height: program.height }}>
      <Side>
        <Minute $color={next ? badgeColors[program.flag] : "#8390b3"}>{program.minute}</Minute>
        {missed && (
          <Play>
            <PlayIcon />
          </Play>
        )}
      </Side>
      <Body>
        <Title $next={next}>{program.title}</Title>
        {missed && <Missed>見逃し</Missed>}
        {program.description && <Description $next={next}>{program.description}</Description>}
      </Body>
    </Program>
  );
};

const Channel = ({ name, text, color }) => {
  const programs = parsePrograms(text);
  return (
    <Column>
      <ColumnName $color={color}>{name}</ColumnName>
      <div style={{ height: slotTops.get(programs[0].time) - GRID_TOP }} />
      {programs.map((program) =>
        program.title === "-" ? (
          <div key={program.time} style={{ height: program.height }} />
        ) : (
          <ProgramCell key={program.time} program={program} />
        )
      )}
    </Column>
  );
};

const App = () => (
  <Page>
    <GlobalStyle />
    <Header>
      <Logo />
      <SiteName>BS番組表</SiteName>
      <SearchBox>
        <SearchIcon />
        番組名・タレント名を入力してください
      </SearchBox>
    </Header>
    <Nav>
      <NavItem>ホーム</NavItem>
      <NavItem>ランキング<Caret /></NavItem>
      <NavItem>タレント</NavItem>
      <NavItem>ジャンル<Caret /></NavItem>
      <NavItem>番組表<Caret /></NavItem>
    </Nav>
    <Selects>
      <Select $width={81} $gap={55}>BS番組表<Chevron /></Select>
      <Select $width={61} $gap={23}>BS<Chevron /></Select>
      <Select $width={100} $gap={0}>3月19日木曜日<Chevron /></Select>
    </Selects>
    <DayBar $height={43}>
      <DayButton>前日の番組表を見る</DayButton>
    </DayBar>
    <Guide>
      <Hours>
        <Corner />
        {hourColors.map((color, i) => {
          const hour = i + 3;
          const height = slotTops.get((hour + 1) * 100) - slotTops.get(hour * 100);
          return (
            <Hour key={hour} $color={color} style={{ height }}>
              {hour > 24 ? hour - 24 : hour}
            </Hour>
          );
        })}
      </Hours>
      {channels.map(([name, text], i) => (
        <Channel key={i} name={name} text={text} color={channelColors[i % 7]} />
      ))}
    </Guide>
    <DayBar $height={46} $last>
      <DayButton>翌日の番組表を見る</DayButton>
    </DayBar>
    <Footer>© 2017 IPG inc.</Footer>
  </Page>
);

export default App;
